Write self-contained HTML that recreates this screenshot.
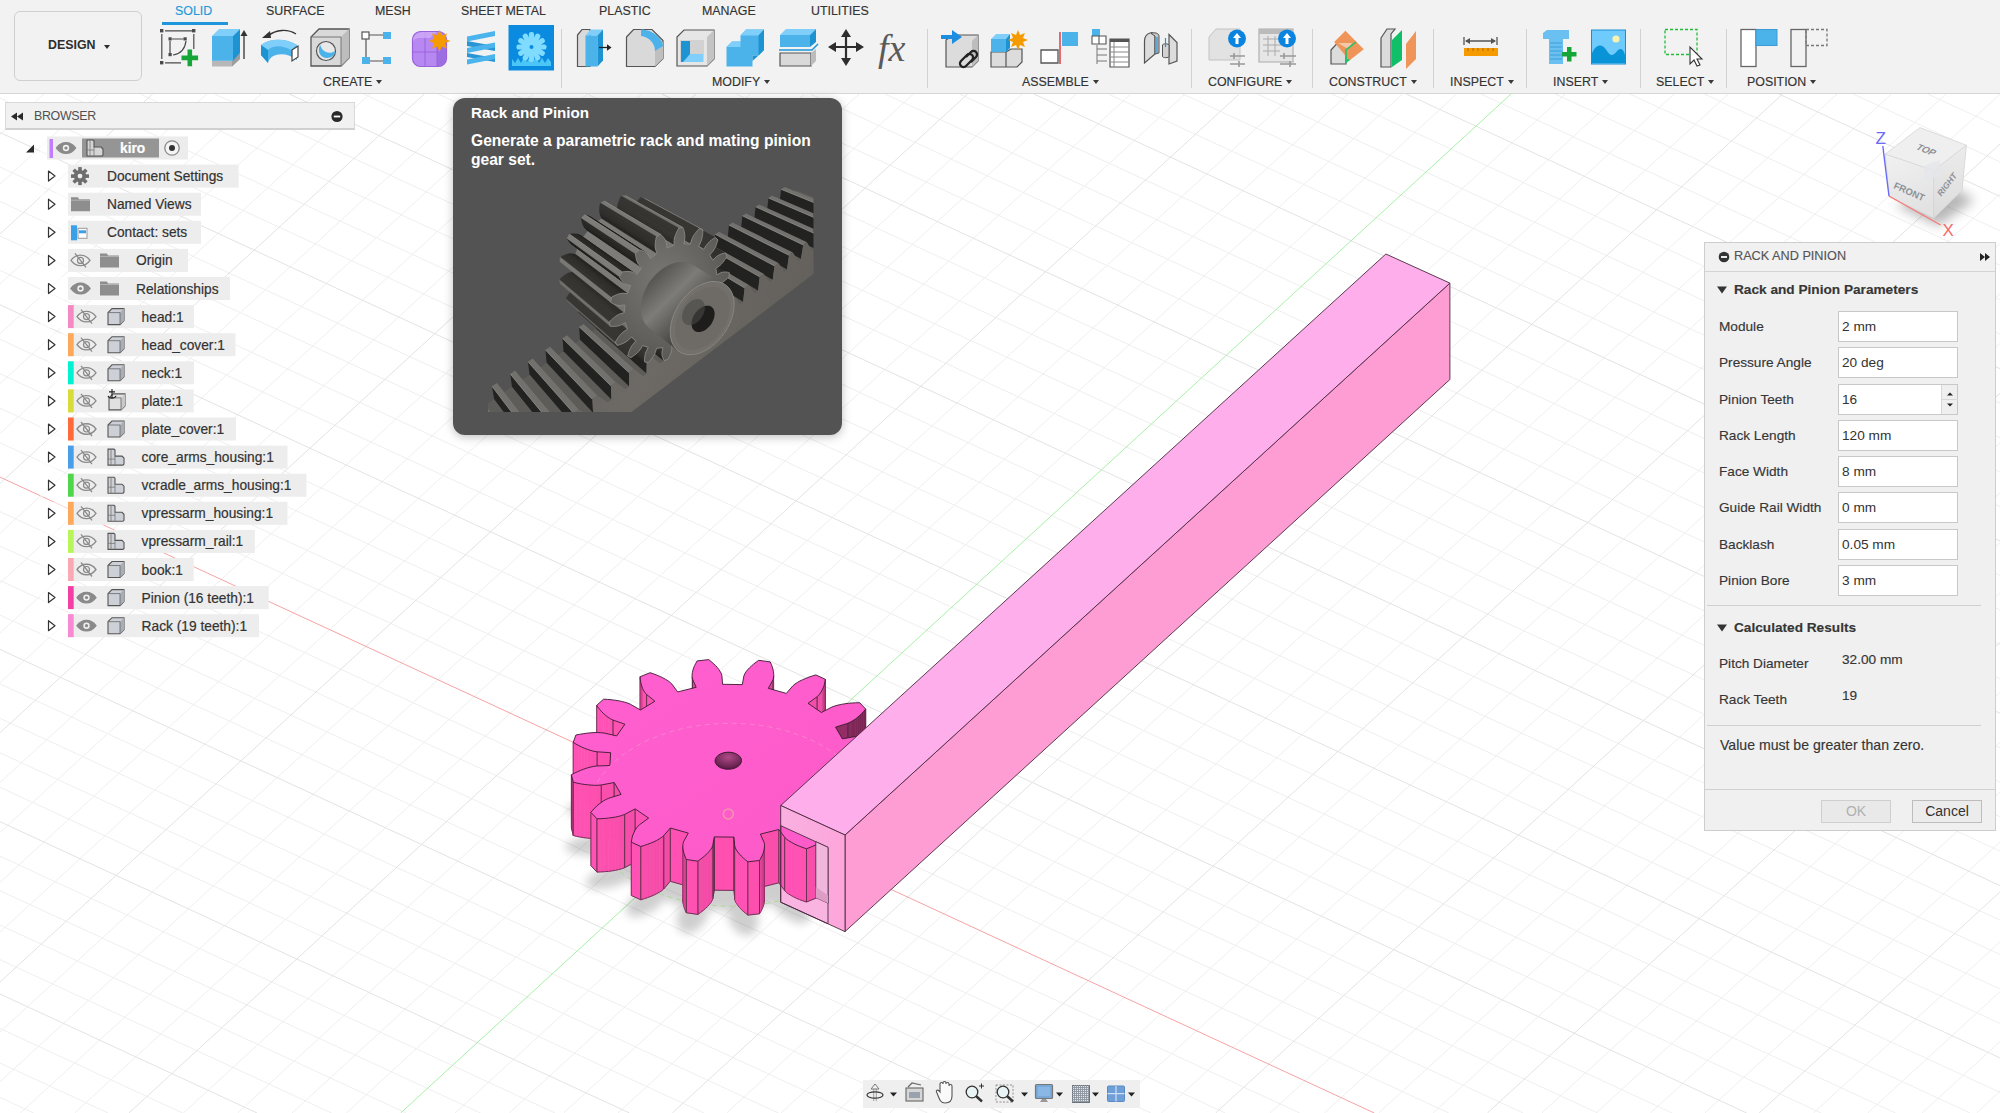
<!DOCTYPE html>
<html><head><meta charset="utf-8">
<style>
*{box-sizing:border-box}
html,body{margin:0;padding:0}
body{width:2000px;height:1113px;overflow:hidden;position:relative;background:#fff;font-family:"Liberation Sans",sans-serif;color:#3c3c3c}
.abs{position:absolute}
svg{position:absolute;left:0;top:0;overflow:visible}
#tb{position:absolute;left:0;top:0;width:2000px;height:94px;background:#f2f2f2;border-bottom:1px solid #d6d6d6}
.tab{position:absolute;top:4px;font-size:12.4px;color:#333;white-space:nowrap;letter-spacing:0;-webkit-text-stroke:0.15px currentColor}
.grp{position:absolute;top:75px;font-size:12.4px;color:#333;white-space:nowrap;-webkit-text-stroke:0.15px #333}
.grp i{display:inline-block;width:0;height:0;border-left:3.5px solid transparent;border-right:3.5px solid transparent;border-top:4.5px solid #3a3a3a;margin-left:4px;vertical-align:2px}
.sep{position:absolute;top:29px;width:1px;height:59px;background:#d2d2d2}
#design{position:absolute;left:14px;top:11px;width:128px;height:70px;border:1px solid #cfcfcf;border-radius:6px;background:#f2f2f2;font-weight:bold;font-size:12.4px;color:#2e2e2e}
#design span{position:absolute;left:33px;top:26px}
#design i{position:absolute;left:89px;top:33px;width:0;height:0;border-left:3.5px solid transparent;border-right:3.5px solid transparent;border-top:4.5px solid #2e2e2e}
/* browser */
#bh{position:absolute;left:5px;top:102px;width:350px;height:28px;background:#f1f1f1;border:1px solid #d9d9d9;border-bottom:2px solid #d0d0d0}
#bh span{position:absolute;left:28px;top:6px;font-size:12.4px;color:#505050;letter-spacing:-0.3px}
.row{position:absolute;height:23px}
.rbg{position:absolute;height:23px;background:#efefef}
.rt{position:absolute;font-size:13.75px;color:#333;white-space:nowrap;-webkit-text-stroke:0.2px #333}
/* tooltip */
#tt{position:absolute;left:453px;top:98px;width:389px;height:337px;background:#535353;border-radius:12px;box-shadow:0 2px 10px rgba(0,0,0,0.25)}
#tt .t1{position:absolute;left:18px;top:6px;font-size:15.2px;font-weight:bold;color:#fff;white-space:nowrap}
#tt .t2{position:absolute;left:18px;top:33px;font-size:15.6px;font-weight:bold;color:#fff;line-height:19px;width:370px}
/* dialog */
#dlg{position:absolute;left:1704px;top:242px;width:292px;height:589px;background:#f0f0f0;border:1px solid #cdcdcd}
#dlgh{position:absolute;left:0;top:0;width:290px;height:29px;background:#f1f1f1;border-bottom:1px solid #d4d4d4}
.lbl{position:absolute;font-size:13.65px;color:#363636;white-space:nowrap;-webkit-text-stroke:0.15px currentColor}
.inp{position:absolute;left:133px;width:120px;height:31px;background:#fff;border:1px solid #c8c8c8}
.inp span{position:absolute;left:3px;top:7px;font-size:13.65px;color:#333;white-space:nowrap}
.hsep{position:absolute;left:2px;width:274px;height:1px;background:#cfcfcf}
.btn{position:absolute;height:23px;border:1px solid #bdbdbd;background:#ececec;font-size:14px;text-align:center;line-height:21px}
/* nav */
#nav{position:absolute;left:863px;top:1080px;width:277px;height:28px;background:#efefef}
</style></head><body>
<svg width="2000" height="1113" viewBox="0 0 2000 1113">
<path d="M0.0 134.3L43.9 94.0M0.0 184.1L98.2 94.0M0.0 283.9L206.9 94.0M0.0 333.7L261.2 94.0M0.0 383.6L315.6 94.0M0.0 433.5L369.9 94.0M0.0 533.2L478.6 94.0M0.0 583.1L532.9 94.0M0.0 1097.4L33.7 1113.0M0.0 632.9L587.3 94.0M0.0 1063.0L108.1 1113.0M0.0 682.8L641.6 94.0M0.0 1028.5L182.6 1113.0M0.0 782.5L750.3 94.0M0.0 959.6L331.6 1113.0M0.0 832.4L804.6 94.0M0.0 925.1L406.1 1113.0M0.0 882.3L859.0 94.0M0.0 890.7L480.5 1113.0M0.0 932.1L913.3 94.0M0.0 856.2L555.0 1113.0M0.0 1031.9L1022.0 94.0M0.0 787.3L704.0 1113.0M0.0 1081.7L1076.3 94.0M0.0 752.8L778.5 1113.0M20.3 1113.0L1130.7 94.0M0.0 718.3L852.9 1113.0M74.6 1113.0L1185.0 94.0M0.0 683.9L927.4 1113.0M183.3 1113.0L1293.7 94.0M0.0 615.0L1076.4 1113.0M237.6 1113.0L1348.0 94.0M0.0 580.5L1150.9 1113.0M292.0 1113.0L1402.4 94.0M0.0 546.0L1225.3 1113.0M346.3 1113.0L1456.7 94.0M0.0 511.6L1299.8 1113.0M455.0 1113.0L1565.4 94.0M0.0 442.7L1448.8 1113.0M509.3 1113.0L1619.7 94.0M0.0 408.2L1523.2 1113.0M563.7 1113.0L1674.1 94.0M0.0 373.7L1597.7 1113.0M618.0 1113.0L1728.4 94.0M0.0 339.3L1672.2 1113.0M726.7 1113.0L1837.1 94.0M0.0 270.4L1821.2 1113.0M781.0 1113.0L1891.4 94.0M0.0 235.9L1895.6 1113.0M835.3 1113.0L1945.8 94.0M0.0 201.4L1970.1 1113.0M889.7 1113.0L2000.0 94.1M0.0 167.0L2000.0 1092.4M998.4 1113.0L2000.0 193.8M0.0 98.0L2000.0 1023.4M1052.7 1113.0L2000.0 243.7M65.7 94.0L2000.0 989.0M1107.0 1113.0L2000.0 293.6M140.2 94.0L2000.0 954.5M1161.4 1113.0L2000.0 343.4M214.7 94.0L2000.0 920.1M1270.1 1113.0L2000.0 443.1M363.7 94.0L2000.0 851.1M1324.4 1113.0L2000.0 493.0M438.1 94.0L2000.0 816.7M1378.7 1113.0L2000.0 542.9M512.6 94.0L2000.0 782.2M1433.1 1113.0L2000.0 592.7M587.1 94.0L2000.0 747.8M1541.8 1113.0L2000.0 692.5M736.0 94.0L2000.0 678.8M1596.1 1113.0L2000.0 742.3M810.5 94.0L2000.0 644.4M1650.4 1113.0L2000.0 792.2M885.0 94.0L2000.0 609.9M1704.8 1113.0L2000.0 842.1M959.5 94.0L2000.0 575.4M1813.5 1113.0L2000.0 941.8M1108.4 94.0L2000.0 506.5M1867.8 1113.0L2000.0 991.7M1182.9 94.0L2000.0 472.1M1922.1 1113.0L2000.0 1041.5M1257.4 94.0L2000.0 437.6M1976.5 1113.0L2000.0 1091.4M1331.9 94.0L2000.0 403.1M1480.8 94.0L2000.0 334.2M1555.3 94.0L2000.0 299.8M1629.8 94.0L2000.0 265.3M1704.3 94.0L2000.0 230.8M1853.2 94.0L2000.0 161.9M1927.7 94.0L2000.0 127.4" stroke="#efefef" stroke-width="1" fill="none"/>
<path d="M0.0 234.0L152.6 94.0M0.0 483.3L424.3 94.0M0.0 732.7L695.9 94.0M0.0 994.0L257.1 1113.0M0.0 982.0L967.6 94.0M0.0 821.7L629.5 1113.0M128.9 1113.0L1239.3 94.0M0.0 649.4L1001.9 1113.0M672.3 1113.0L1782.7 94.0M0.0 304.8L1746.7 1113.0M944.0 1113.0L2000.0 144.0M0.0 132.5L2000.0 1057.9M1215.7 1113.0L2000.0 393.3M289.2 94.0L2000.0 885.6M1487.4 1113.0L2000.0 642.6M661.6 94.0L2000.0 713.3M1759.1 1113.0L2000.0 891.9M1034.0 94.0L2000.0 541.0M1406.4 94.0L2000.0 368.7M1778.8 94.0L2000.0 196.4" stroke="#e3e3e3" stroke-width="1" fill="none"/>
<path d="M0.0 477.1L1374.3 1113.0" stroke="#f7a3a3" stroke-width="1" fill="none"/>
<path d="M400.6 1113.0L1511.0 94.0" stroke="#a6f0a6" stroke-width="1" fill="none"/>
<defs><filter id="gsh" x="-30%" y="-30%" width="160%" height="160%"><feGaussianBlur stdDeviation="5"/></filter></defs><polygon points="810.1,886.9 820.1,892.9 822.8,894.1 825.8,895.2 829.0,896.0 832.4,896.8 835.9,897.4 839.5,898.0 843.3,898.4 847.1,898.7 853.9,892.7 852.3,890.4 850.6,888.2 848.8,886.1 846.8,884.1 844.7,882.2 842.5,880.5 840.1,878.9 837.5,877.6 825.7,873.1 833.9,861.7 846.6,864.8 849.8,865.3 853.2,865.5 856.6,865.5 860.2,865.4 863.7,865.1 867.4,864.7 871.0,864.2 874.7,863.6 877.4,856.3 874.6,854.5 871.7,852.9 868.8,851.4 865.8,850.0 862.8,848.8 859.7,847.7 856.6,846.8 853.4,846.2 840.0,845.0 840.7,832.3 854.2,832.1 857.4,831.7 860.6,831.1 863.8,830.2 866.9,829.2 870.1,828.1 873.1,826.8 876.2,825.4 879.2,823.9 877.3,816.4 873.7,815.5 870.1,814.7 866.5,814.0 863.0,813.5 859.5,813.1 856.0,812.8 852.7,812.8 849.4,813.0 836.4,815.1 829.5,803.1 841.7,799.6 844.4,798.4 847.0,797.1 849.4,795.5 851.7,793.8 853.9,792.0 855.9,790.0 857.9,788.0 859.7,785.8 853.6,779.3 849.7,779.3 845.9,779.4 842.3,779.7 838.7,780.0 835.3,780.5 832.0,781.2 828.9,782.0 826.0,783.0 815.4,788.2 802.0,778.6 811.0,772.3 812.9,770.6 814.4,768.7 815.7,766.6 816.7,764.5 817.7,762.2 818.4,759.9 818.9,757.5 819.3,755.0 809.8,750.5 806.3,751.4 803.0,752.5 799.8,753.6 796.7,754.8 793.9,756.2 791.3,757.6 788.9,759.1 786.9,760.7 780.3,768.2 762.3,762.6 766.9,754.5 767.5,752.4 767.7,750.2 767.7,748.0 767.4,745.7 766.9,743.4 766.2,741.1 765.3,738.7 764.2,736.3 752.8,734.4 750.2,736.1 747.7,737.9 745.5,739.8 743.4,741.7 741.6,743.6 740.0,745.6 738.7,747.6 737.9,749.6 736.3,758.2 716.6,757.4 715.9,748.7 715.3,746.7 714.2,744.6 712.8,742.5 711.2,740.4 709.4,738.4 707.3,736.4 705.1,734.4 702.7,732.4 691.1,733.4 689.8,735.7 688.6,738.0 687.6,740.3 686.9,742.6 686.4,744.8 686.1,747.1 686.1,749.2 686.5,751.4 690.2,759.8 671.7,763.9 665.9,756.0 664.1,754.2 661.9,752.5 659.4,750.9 656.7,749.4 653.8,747.9 650.8,746.5 647.5,745.2 644.1,744.0 634.2,747.8 634.3,750.3 634.6,752.7 635.1,755.1 635.8,757.4 636.6,759.6 637.7,761.8 639.0,763.8 640.6,765.7 648.9,772.7 634.5,781.1 624.5,775.1 621.8,773.9 618.8,772.8 615.6,772.0 612.2,771.2 608.7,770.6 605.1,770.0 601.3,769.6 597.5,769.3 590.7,775.3 592.3,777.6 594.0,779.8 595.8,781.9 597.8,783.9 599.9,785.8 602.1,787.5 604.5,789.1 607.1,790.4 618.9,794.9 610.7,806.3 598.0,803.2 594.8,802.7 591.4,802.5 588.0,802.5 584.4,802.6 580.9,802.9 577.2,803.3 573.6,803.8 569.9,804.4 567.2,811.7 570.0,813.5 572.9,815.1 575.8,816.6 578.8,818.0 581.8,819.2 584.9,820.3 588.0,821.2 591.2,821.8 604.6,823.0 603.9,835.7 590.4,835.9 587.2,836.3 584.0,836.9 580.8,837.8 577.7,838.8 574.5,839.9 571.5,841.2 568.4,842.6 565.4,844.1 567.3,851.6 570.9,852.5 574.5,853.3 578.1,854.0 581.6,854.5 585.1,854.9 588.6,855.2 591.9,855.2 595.2,855.0 608.2,852.9 615.1,864.9 602.9,868.4 600.2,869.6 597.6,870.9 595.2,872.5 592.9,874.2 590.7,876.0 588.7,878.0 586.7,880.0 584.9,882.2 591.0,888.7 594.9,888.7 598.7,888.6 602.3,888.3 605.9,888.0 609.3,887.5 612.6,886.8 615.7,886.0 618.6,885.0 629.2,879.8 642.6,889.4 633.6,895.7 631.7,897.4 630.2,899.3 628.9,901.4 627.9,903.5 626.9,905.8 626.2,908.1 625.7,910.5 625.3,913.0 634.8,917.5 638.3,916.6 641.6,915.5 644.8,914.4 647.9,913.2 650.7,911.8 653.3,910.4 655.7,908.9 657.7,907.3 664.3,899.8 682.3,905.4 677.7,913.5 677.1,915.6 676.9,917.8 676.9,920.0 677.2,922.3 677.7,924.6 678.4,926.9 679.3,929.3 680.4,931.7 691.8,933.6 694.4,931.9 696.9,930.1 699.1,928.2 701.2,926.3 703.0,924.4 704.6,922.4 705.9,920.4 706.7,918.4 708.3,909.8 728.0,910.6 728.7,919.3 729.3,921.3 730.4,923.4 731.8,925.5 733.4,927.6 735.2,929.6 737.3,931.6 739.5,933.6 741.9,935.6 753.5,934.6 754.8,932.3 756.0,930.0 757.0,927.7 757.7,925.4 758.2,923.2 758.5,920.9 758.5,918.8 758.1,916.6 754.4,908.2 772.9,904.1 778.7,912.0 780.5,913.8 782.7,915.5 785.2,917.1 787.9,918.6 790.8,920.1 793.8,921.5 797.1,922.8 800.5,924.0 810.4,920.2 810.3,917.7 810.0,915.3 809.5,912.9 808.8,910.6 808.0,908.4 806.9,906.2 805.6,904.2 804.0,902.3 795.7,895.3" fill="#000" opacity="0.19" filter="url(#gsh)"/>
<polygon points="843.9,869.0 847.9,865.1 851.6,861.0 855.0,856.9 858.0,852.6 860.6,848.2 862.9,843.7 864.9,839.2 866.4,834.5 867.6,829.9 868.4,825.2 868.8,820.4 868.8,815.7 868.4,810.9 867.7,806.2 866.5,801.5 865.0,796.8 863.1,792.2 860.9,787.6 858.3,783.1 855.3,778.8 852.0,774.5 848.3,770.3 844.3,766.2 840.0,762.3 835.4,758.5 830.5,754.9 825.3,751.5 819.8,748.2 814.1,745.1 808.2,742.2 802.0,739.5 795.7,737.0 789.1,734.7 782.4,732.7 775.5,730.8 768.6,729.2 761.5,727.9 754.3,726.8 747.0,725.9 739.7,725.3 732.3,724.9 725.0,724.7 717.6,724.9 710.3,725.2 703.0,725.8 695.8,726.7 688.7,727.8 681.7,729.1 674.9,730.7 668.1,732.5 661.6,734.6 655.2,736.8 649.0,739.3 643.0,742.0 637.3,744.9 631.8,747.9 626.6,751.2 621.7,754.6 617.0,758.2 612.7,762.0 608.7,765.9 605.0,770.0 601.6,774.1 598.6,778.4 596.0,782.8 593.7,787.3 591.7,791.8 590.2,796.5 589.0,801.1 588.2,805.8 587.8,810.6 587.8,815.3 588.2,820.1 588.9,824.8 590.1,829.5 591.6,834.2 593.5,838.8 595.7,843.4 598.3,847.9 601.3,852.2 604.6,856.5 608.3,860.7 612.3,864.8 616.6,868.7 621.2,872.5 626.1,876.1 631.3,879.5 636.8,882.8 642.5,885.9 648.4,888.8 654.6,891.5 660.9,894.0 667.5,896.3 674.2,898.3 681.1,900.2 688.0,901.8 695.1,903.1 702.3,904.2 709.6,905.1 716.9,905.7 724.3,906.1 731.6,906.3 739.0,906.1 746.3,905.8 753.6,905.2 760.8,904.3 767.9,903.2 774.9,901.9 781.7,900.3 788.5,898.5 795.0,896.4 801.4,894.2 807.6,891.7 813.6,889.0 819.3,886.1 824.8,883.1 830.0,879.8 834.9,876.4 839.6,872.8" fill="none" stroke="#a8dc90" stroke-width="1" stroke-dasharray="5 4"/>
<polygon points="780.8,825.7 828.0,847.3 828.0,923.8 780.7,902.2" fill="#f9b4e2"/>
<polygon points="640.2,730.0 640.3,732.5 640.3,679.2 640.2,676.7" fill="#932e66" stroke="#932e66" stroke-width="0.7"/><path d="M640.2 730.0L640.3 732.5M640.2 730.0L640.2 676.7" stroke="#4a2a3c" stroke-width="0.8" fill="none"/>
<polygon points="692.1,730.1 692.5,732.2 692.5,679.0 692.1,676.9" fill="#b1377a" stroke="#b1377a" stroke-width="0.7"/><path d="M692.1 730.1L692.5 732.2M692.5 732.2L692.5 679.0" stroke="#4a2a3c" stroke-width="0.8" fill="none"/>
<polygon points="773.5,731.2 773.7,729.1 773.7,675.8 773.5,678.0" fill="#8c2c60" stroke="#8c2c60" stroke-width="0.7"/><path d="M773.5 731.2L773.7 729.1" stroke="#4a2a3c" stroke-width="0.8" fill="none"/>
<polygon points="640.3,732.5 640.6,734.9 640.6,681.7 640.3,679.2" fill="#a23370" stroke="#a23370" stroke-width="0.7"/><path d="M640.3 732.5L640.6 734.9" stroke="#4a2a3c" stroke-width="0.8" fill="none"/>
<polygon points="772.9,733.3 773.5,731.2 773.5,678.0 772.9,680.1" fill="#b3387b" stroke="#b3387b" stroke-width="0.7"/><path d="M772.9 733.3L773.5 731.2M772.9 733.3L772.9 680.1" stroke="#4a2a3c" stroke-width="0.8" fill="none"/>
<polygon points="640.6,734.9 641.1,737.3 641.1,684.0 640.6,681.7" fill="#b2387b" stroke="#b2387b" stroke-width="0.7"/><path d="M640.6 734.9L641.1 737.3" stroke="#4a2a3c" stroke-width="0.8" fill="none"/>
<polygon points="824.9,735.0 825.3,732.5 825.3,679.3 824.9,681.7" fill="#952f67" stroke="#952f67" stroke-width="0.7"/><path d="M824.9 735.0L825.3 732.5M825.3 732.5L825.3 679.3" stroke="#4a2a3c" stroke-width="0.8" fill="none"/>
<polygon points="692.5,732.2 696.2,740.6 696.2,687.3 692.5,679.0" fill="#de4699" stroke="#de4699" stroke-width="0.7"/><path d="M692.5 732.2L696.2 740.6M692.5 732.2L692.5 679.0M696.2 740.6L696.2 687.3" stroke="#4a2a3c" stroke-width="0.8" fill="none"/>
<polygon points="641.1,737.3 641.8,739.6 641.8,686.3 641.1,684.0" fill="#c33d86" stroke="#c33d86" stroke-width="0.7"/><path d="M641.1 737.3L641.8 739.6" stroke="#4a2a3c" stroke-width="0.8" fill="none"/>
<polygon points="824.4,737.4 824.9,735.0 824.9,681.7 824.4,684.2" fill="#a43371" stroke="#a43371" stroke-width="0.7"/><path d="M824.4 737.4L824.9 735.0" stroke="#4a2a3c" stroke-width="0.8" fill="none"/>
<polygon points="768.3,741.6 772.9,733.3 772.9,680.1 768.3,688.3" fill="#e0469b" stroke="#e0469b" stroke-width="0.7"/><path d="M768.3 741.6L772.9 733.3M768.3 741.6L768.3 688.3M772.9 733.3L772.9 680.1" stroke="#4a2a3c" stroke-width="0.8" fill="none"/>
<polygon points="641.8,739.6 642.6,741.8 642.6,688.5 641.8,686.3" fill="#d54393" stroke="#d54393" stroke-width="0.7"/><path d="M641.8 739.6L642.6 741.8" stroke="#4a2a3c" stroke-width="0.8" fill="none"/>
<polygon points="823.7,739.8 824.4,737.4 824.4,684.2 823.7,686.5" fill="#b4387c" stroke="#b4387c" stroke-width="0.7"/><path d="M823.7 739.8L824.4 737.4" stroke="#4a2a3c" stroke-width="0.8" fill="none"/>
<polygon points="642.6,741.8 643.7,743.9 643.7,690.6 642.6,688.5" fill="#e949a1" stroke="#e949a1" stroke-width="0.7"/><path d="M642.6 741.8L643.7 743.9" stroke="#4a2a3c" stroke-width="0.8" fill="none"/>
<polygon points="822.7,742.1 823.7,739.8 823.7,686.5 822.7,688.8" fill="#c43e88" stroke="#c43e88" stroke-width="0.7"/><path d="M822.7 742.1L823.7 739.8" stroke="#4a2a3c" stroke-width="0.8" fill="none"/>
<polygon points="643.7,743.9 645.0,745.9 645.0,692.6 643.7,690.6" fill="#ff51b1" stroke="#ff51b1" stroke-width="0.7"/><path d="M643.7 743.9L645.0 745.9" stroke="#4a2a3c" stroke-width="0.8" fill="none"/>
<polygon points="821.7,744.2 822.7,742.1 822.7,688.8 821.7,691.0" fill="#d74394" stroke="#d74394" stroke-width="0.7"/><path d="M821.7 744.2L822.7 742.1" stroke="#4a2a3c" stroke-width="0.8" fill="none"/>
<polygon points="645.0,745.9 646.6,747.7 646.6,694.5 645.0,692.6" fill="#ff52b5" stroke="#ff52b5" stroke-width="0.7"/><path d="M645.0 745.9L646.6 747.7M646.6 747.7L646.6 694.5" stroke="#4a2a3c" stroke-width="0.8" fill="none"/>
<polygon points="820.4,746.3 821.7,744.2 821.7,691.0 820.4,693.0" fill="#eb4aa2" stroke="#eb4aa2" stroke-width="0.7"/><path d="M820.4 746.3L821.7 744.2" stroke="#4a2a3c" stroke-width="0.8" fill="none"/>
<polygon points="818.9,748.3 820.4,746.3 820.4,693.0 818.9,695.0" fill="#f14ca7" stroke="#f14ca7" stroke-width="0.7"/><path d="M818.9 748.3L820.4 746.3" stroke="#4a2a3c" stroke-width="0.8" fill="none"/>
<polygon points="646.6,747.7 654.9,754.5 654.9,701.2 646.6,694.5" fill="#ff52b5" stroke="#ff52b5" stroke-width="0.7"/><path d="M646.6 747.7L654.9 754.5M646.6 747.7L646.6 694.5M654.9 754.5L654.9 701.2" stroke="#4a2a3c" stroke-width="0.8" fill="none"/>
<polygon points="817.0,750.1 818.9,748.3 818.9,695.0 817.0,696.8" fill="#f34ca7" stroke="#f34ca7" stroke-width="0.7"/><path d="M817.0 750.1L818.9 748.3M817.0 750.1L817.0 696.8" stroke="#4a2a3c" stroke-width="0.8" fill="none"/>
<polygon points="808.0,756.6 817.0,750.1 817.0,696.8 808.0,703.3" fill="#f44da9" stroke="#f44da9" stroke-width="0.7"/><path d="M808.0 756.6L817.0 750.1M808.0 756.6L808.0 703.3M817.0 750.1L817.0 696.8" stroke="#4a2a3c" stroke-width="0.8" fill="none"/>
<polygon points="596.7,758.6 598.3,760.9 598.3,707.6 596.7,705.4" fill="#ff52b5" stroke="#ff52b5" stroke-width="0.7"/><path d="M596.7 758.6L598.3 760.9M596.7 758.6L596.7 705.4" stroke="#4a2a3c" stroke-width="0.8" fill="none"/>
<polygon points="598.3,760.9 600.0,763.0 600.0,709.8 598.3,707.6" fill="#ff52b5" stroke="#ff52b5" stroke-width="0.7"/><path d="M598.3 760.9L600.0 763.0" stroke="#4a2a3c" stroke-width="0.8" fill="none"/>
<polygon points="600.0,763.0 601.8,765.1 601.8,711.8 600.0,709.8" fill="#ff52b5" stroke="#ff52b5" stroke-width="0.7"/><path d="M600.0 763.0L601.8 765.1" stroke="#4a2a3c" stroke-width="0.8" fill="none"/>
<polygon points="601.8,765.1 603.8,767.0 603.8,713.8 601.8,711.8" fill="#ff52b5" stroke="#ff52b5" stroke-width="0.7"/><path d="M601.8 765.1L603.8 767.0" stroke="#4a2a3c" stroke-width="0.8" fill="none"/>
<polygon points="863.9,764.5 865.7,762.3 865.7,709.0 863.9,711.2" fill="#7d2756" stroke="#7d2756" stroke-width="0.7"/><path d="M863.9 764.5L865.7 762.3M865.7 762.3L865.7 709.0" stroke="#4a2a3c" stroke-width="0.8" fill="none"/>
<polygon points="603.8,767.0 605.9,768.9 605.9,715.6 603.8,713.8" fill="#ff52b5" stroke="#ff52b5" stroke-width="0.7"/><path d="M603.8 767.0L605.9 768.9" stroke="#4a2a3c" stroke-width="0.8" fill="none"/>
<polygon points="861.9,766.6 863.9,764.5 863.9,711.2 861.9,713.3" fill="#7c2756" stroke="#7c2756" stroke-width="0.7"/><path d="M861.9 766.6L863.9 764.5" stroke="#4a2a3c" stroke-width="0.8" fill="none"/>
<polygon points="605.9,768.9 608.1,770.5 608.1,717.3 605.9,715.6" fill="#ff52b5" stroke="#ff52b5" stroke-width="0.7"/><path d="M605.9 768.9L608.1 770.5" stroke="#4a2a3c" stroke-width="0.8" fill="none"/>
<polygon points="859.9,768.6 861.9,766.6 861.9,713.3 859.9,715.3" fill="#7c2756" stroke="#7c2756" stroke-width="0.7"/><path d="M859.9 768.6L861.9 766.6" stroke="#4a2a3c" stroke-width="0.8" fill="none"/>
<polygon points="608.1,770.5 610.5,772.1 610.5,718.8 608.1,717.3" fill="#ff52b5" stroke="#ff52b5" stroke-width="0.7"/><path d="M608.1 770.5L610.5 772.1" stroke="#4a2a3c" stroke-width="0.8" fill="none"/>
<polygon points="610.5,772.1 613.1,773.3 613.1,720.1 610.5,718.8" fill="#ff52b4" stroke="#ff52b4" stroke-width="0.7"/><path d="M610.5 772.1L613.1 773.3M613.1 773.3L613.1 720.1" stroke="#4a2a3c" stroke-width="0.8" fill="none"/>
<polygon points="857.7,770.5 859.9,768.6 859.9,715.3 857.7,717.2" fill="#7c2756" stroke="#7c2756" stroke-width="0.7"/><path d="M857.7 770.5L859.9 768.6" stroke="#4a2a3c" stroke-width="0.8" fill="none"/>
<polygon points="855.4,772.3 857.7,770.5 857.7,717.2 855.4,719.0" fill="#7e2757" stroke="#7e2757" stroke-width="0.7"/><path d="M855.4 772.3L857.7 770.5" stroke="#4a2a3c" stroke-width="0.8" fill="none"/>
<polygon points="613.1,773.3 624.9,777.5 624.9,724.2 613.1,720.1" fill="#ff52b3" stroke="#ff52b3" stroke-width="0.7"/><path d="M613.1 773.3L624.9 777.5M613.1 773.3L613.1 720.1M624.9 777.5L624.9 724.2" stroke="#4a2a3c" stroke-width="0.8" fill="none"/>
<polygon points="853.0,773.9 855.4,772.3 855.4,719.0 853.0,720.6" fill="#7f2858" stroke="#7f2858" stroke-width="0.7"/><path d="M853.0 773.9L855.4 772.3" stroke="#4a2a3c" stroke-width="0.8" fill="none"/>
<polygon points="850.4,775.3 853.0,773.9 853.0,720.6 850.4,722.0" fill="#82295a" stroke="#82295a" stroke-width="0.7"/><path d="M850.4 775.3L853.0 773.9" stroke="#4a2a3c" stroke-width="0.8" fill="none"/>
<polygon points="847.7,776.5 850.4,775.3 850.4,722.0 847.7,723.3" fill="#852a5c" stroke="#852a5c" stroke-width="0.7"/><path d="M847.7 776.5L850.4 775.3M847.7 776.5L847.7 723.3" stroke="#4a2a3c" stroke-width="0.8" fill="none"/>
<polygon points="835.5,780.4 847.7,776.5 847.7,723.3 835.5,727.1" fill="#922e65" stroke="#922e65" stroke-width="0.7"/><path d="M835.5 780.4L847.7 776.5M835.5 780.4L835.5 727.1M847.7 776.5L847.7 723.3" stroke="#4a2a3c" stroke-width="0.8" fill="none"/>
<polygon points="573.2,795.7 576.0,797.4 576.0,744.1 573.2,742.4" fill="#ff52b4" stroke="#ff52b4" stroke-width="0.7"/><path d="M573.2 795.7L576.0 797.4M573.2 795.7L573.2 742.4" stroke="#4a2a3c" stroke-width="0.8" fill="none"/>
<polygon points="576.0,797.4 578.9,798.9 578.9,745.6 576.0,744.1" fill="#ff52b4" stroke="#ff52b4" stroke-width="0.7"/><path d="M576.0 797.4L578.9 798.9" stroke="#4a2a3c" stroke-width="0.8" fill="none"/>
<polygon points="578.9,798.9 581.8,800.3 581.8,747.1 578.9,745.6" fill="#ff52b4" stroke="#ff52b4" stroke-width="0.7"/><path d="M578.9 798.9L581.8 800.3" stroke="#4a2a3c" stroke-width="0.8" fill="none"/>
<polygon points="581.8,800.3 584.8,801.6 584.8,748.4 581.8,747.1" fill="#ff52b4" stroke="#ff52b4" stroke-width="0.7"/><path d="M581.8 800.3L584.8 801.6" stroke="#4a2a3c" stroke-width="0.8" fill="none"/>
<polygon points="584.8,801.6 587.8,802.8 587.8,749.5 584.8,748.4" fill="#ff52b3" stroke="#ff52b3" stroke-width="0.7"/><path d="M584.8 801.6L587.8 802.8" stroke="#4a2a3c" stroke-width="0.8" fill="none"/>
<polygon points="587.8,802.8 590.9,803.8 590.9,750.5 587.8,749.5" fill="#ff51b3" stroke="#ff51b3" stroke-width="0.7"/><path d="M587.8 802.8L590.9 803.8" stroke="#4a2a3c" stroke-width="0.8" fill="none"/>
<polygon points="590.9,803.8 594.0,804.6 594.0,751.3 590.9,750.5" fill="#ff51b3" stroke="#ff51b3" stroke-width="0.7"/><path d="M590.9 803.8L594.0 804.6" stroke="#4a2a3c" stroke-width="0.8" fill="none"/>
<polygon points="882.2,801.5 885.2,799.9 885.2,746.6 882.2,748.2" fill="#672047" stroke="#672047" stroke-width="0.7"/><path d="M882.2 801.5L885.2 799.9M885.2 799.9L885.2 746.6" stroke="#4a2a3c" stroke-width="0.8" fill="none"/>
<polygon points="594.0,804.6 597.2,805.1 597.2,751.8 594.0,751.3" fill="#ff51b2" stroke="#ff51b2" stroke-width="0.7"/><path d="M594.0 804.6L597.2 805.1M597.2 805.1L597.2 751.8" stroke="#4a2a3c" stroke-width="0.8" fill="none"/>
<polygon points="597.2,805.1 610.6,806.0 610.6,752.7 597.2,751.8" fill="#ff50b1" stroke="#ff50b1" stroke-width="0.7"/><path d="M597.2 805.1L610.6 806.0M597.2 805.1L597.2 751.8M610.6 806.0L610.6 752.7" stroke="#4a2a3c" stroke-width="0.8" fill="none"/>
<polygon points="879.1,803.0 882.2,801.5 882.2,748.2 879.1,749.7" fill="#682148" stroke="#682148" stroke-width="0.7"/><path d="M879.1 803.0L882.2 801.5" stroke="#4a2a3c" stroke-width="0.8" fill="none"/>
<polygon points="876.1,804.4 879.1,803.0 879.1,749.7 876.1,751.1" fill="#682148" stroke="#682148" stroke-width="0.7"/><path d="M876.1 804.4L879.1 803.0" stroke="#4a2a3c" stroke-width="0.8" fill="none"/>
<polygon points="872.9,805.6 876.1,804.4 876.1,751.1 872.9,752.3" fill="#682148" stroke="#682148" stroke-width="0.7"/><path d="M872.9 805.6L876.1 804.4" stroke="#4a2a3c" stroke-width="0.8" fill="none"/>
<polygon points="869.8,806.6 872.9,805.6 872.9,752.3 869.8,753.4" fill="#682148" stroke="#682148" stroke-width="0.7"/><path d="M869.8 806.6L872.9 805.6" stroke="#4a2a3c" stroke-width="0.8" fill="none"/>
<polygon points="866.6,807.5 869.8,806.6 869.8,753.4 866.6,754.3" fill="#692148" stroke="#692148" stroke-width="0.7"/><path d="M866.6 807.5L869.8 806.6" stroke="#4a2a3c" stroke-width="0.8" fill="none"/>
<polygon points="863.4,808.3 866.6,807.5 866.6,754.3 863.4,755.0" fill="#692149" stroke="#692149" stroke-width="0.7"/><path d="M863.4 808.3L866.6 807.5" stroke="#4a2a3c" stroke-width="0.8" fill="none"/>
<polygon points="860.2,808.7 863.4,808.3 863.4,755.0 860.2,755.4" fill="#6a2149" stroke="#6a2149" stroke-width="0.7"/><path d="M860.2 808.7L863.4 808.3M860.2 808.7L860.2 755.4" stroke="#4a2a3c" stroke-width="0.8" fill="none"/>
<polygon points="846.7,809.2 860.2,808.7 860.2,755.4 846.7,756.0" fill="#6b214a" stroke="#6b214a" stroke-width="0.7"/><path d="M846.7 809.2L860.2 808.7M846.7 809.2L846.7 756.0M860.2 808.7L860.2 755.4" stroke="#4a2a3c" stroke-width="0.8" fill="none"/>
<polygon points="846.0,822.0 846.7,809.2 846.7,756.0 846.0,768.7" fill="#361125" stroke="#361125" stroke-width="0.7"/><path d="M846.0 822.0L846.7 809.2M846.0 822.0L846.0 768.7M846.7 809.2L846.7 756.0" stroke="#4a2a3c" stroke-width="0.8" fill="none"/>
<polygon points="571.4,828.1 573.3,835.5 573.3,782.2 571.4,774.8" fill="#bc3b82" stroke="#bc3b82" stroke-width="0.7"/><path d="M571.4 828.1L573.3 835.5M571.4 828.1L571.4 774.8M573.3 835.5L573.3 782.2" stroke="#4a2a3c" stroke-width="0.8" fill="none"/>
<polygon points="573.3,835.5 576.9,836.4 576.9,783.1 573.3,782.2" fill="#ff51b2" stroke="#ff51b2" stroke-width="0.7"/><path d="M573.3 835.5L576.9 836.4M573.3 835.5L573.3 782.2" stroke="#4a2a3c" stroke-width="0.8" fill="none"/>
<polygon points="576.9,836.4 580.5,837.1 580.5,783.8 576.9,783.1" fill="#ff51b2" stroke="#ff51b2" stroke-width="0.7"/><path d="M576.9 836.4L580.5 837.1" stroke="#4a2a3c" stroke-width="0.8" fill="none"/>
<polygon points="601.2,838.2 614.2,835.8 614.2,782.5 601.2,785.0" fill="#fb4fad" stroke="#fb4fad" stroke-width="0.7"/><path d="M601.2 838.2L614.2 835.8M601.2 838.2L601.2 785.0M614.2 835.8L614.2 782.5" stroke="#4a2a3c" stroke-width="0.8" fill="none"/>
<polygon points="580.5,837.1 584.1,837.7 584.1,784.4 580.5,783.8" fill="#ff51b2" stroke="#ff51b2" stroke-width="0.7"/><path d="M580.5 837.1L584.1 837.7" stroke="#4a2a3c" stroke-width="0.8" fill="none"/>
<polygon points="584.1,837.7 587.6,838.1 587.6,784.8 584.1,784.4" fill="#ff51b1" stroke="#ff51b1" stroke-width="0.7"/><path d="M584.1 837.7L587.6 838.1" stroke="#4a2a3c" stroke-width="0.8" fill="none"/>
<polygon points="587.6,838.1 591.1,838.4 591.1,785.1 587.6,784.8" fill="#ff50b1" stroke="#ff50b1" stroke-width="0.7"/><path d="M587.6 838.1L591.1 838.4" stroke="#4a2a3c" stroke-width="0.8" fill="none"/>
<polygon points="597.9,838.5 601.2,838.2 601.2,785.0 597.9,785.3" fill="#fd4faf" stroke="#fd4faf" stroke-width="0.7"/><path d="M597.9 838.5L601.2 838.2M601.2 838.2L601.2 785.0" stroke="#4a2a3c" stroke-width="0.8" fill="none"/>
<polygon points="591.1,838.4 594.6,838.6 594.6,785.3 591.1,785.1" fill="#ff50b0" stroke="#ff50b0" stroke-width="0.7"/><path d="M591.1 838.4L594.6 838.6" stroke="#4a2a3c" stroke-width="0.8" fill="none"/>
<polygon points="594.6,838.6 597.9,838.5 597.9,785.3 594.6,785.3" fill="#ff50b0" stroke="#ff50b0" stroke-width="0.7"/><path d="M594.6 838.6L597.9 838.5" stroke="#4a2a3c" stroke-width="0.8" fill="none"/>
<polygon points="880.7,839.7 883.4,832.3 883.4,779.0 880.7,786.4" fill="#501937" stroke="#501937" stroke-width="0.7"/><path d="M880.7 839.7L883.4 832.3M880.7 839.7L880.7 786.4M883.4 832.3L883.4 779.0" stroke="#4a2a3c" stroke-width="0.8" fill="none"/>
<polygon points="614.2,835.8 621.1,847.6 621.1,794.4 614.2,782.5" fill="#f74daa" stroke="#f74daa" stroke-width="0.7"/><path d="M614.2 835.8L621.1 847.6M614.2 835.8L614.2 782.5M621.1 847.6L621.1 794.4" stroke="#4a2a3c" stroke-width="0.8" fill="none"/>
<polygon points="839.9,838.8 852.6,841.7 852.6,788.4 839.9,785.6" fill="#ff51b2" stroke="#ff51b2" stroke-width="0.7"/><path d="M839.9 838.8L852.6 841.7M839.9 838.8L839.9 785.6M852.6 841.7L852.6 788.4" stroke="#4a2a3c" stroke-width="0.8" fill="none"/>
<polygon points="877.0,840.4 880.7,839.7 880.7,786.4 877.0,787.2" fill="#fb4fad" stroke="#fb4fad" stroke-width="0.7"/><path d="M877.0 840.4L880.7 839.7M880.7 839.7L880.7 786.4" stroke="#4a2a3c" stroke-width="0.8" fill="none"/>
<polygon points="873.4,841.1 877.0,840.4 877.0,787.2 873.4,787.8" fill="#fc4fae" stroke="#fc4fae" stroke-width="0.7"/><path d="M873.4 841.1L877.0 840.4" stroke="#4a2a3c" stroke-width="0.8" fill="none"/>
<polygon points="869.7,841.6 873.4,841.1 873.4,787.8 869.7,788.3" fill="#fc4fae" stroke="#fc4fae" stroke-width="0.7"/><path d="M869.7 841.6L873.4 841.1" stroke="#4a2a3c" stroke-width="0.8" fill="none"/>
<polygon points="852.6,841.7 855.8,842.1 855.8,788.8 852.6,788.4" fill="#ff51b1" stroke="#ff51b1" stroke-width="0.7"/><path d="M852.6 841.7L855.8 842.1M852.6 841.7L852.6 788.4" stroke="#4a2a3c" stroke-width="0.8" fill="none"/>
<polygon points="866.2,841.9 869.7,841.6 869.7,788.3 866.2,788.6" fill="#fd4faf" stroke="#fd4faf" stroke-width="0.7"/><path d="M866.2 841.9L869.7 841.6" stroke="#4a2a3c" stroke-width="0.8" fill="none"/>
<polygon points="862.6,842.1 866.2,841.9 866.2,788.6 862.6,788.8" fill="#fe50af" stroke="#fe50af" stroke-width="0.7"/><path d="M862.6 842.1L866.2 841.9" stroke="#4a2a3c" stroke-width="0.8" fill="none"/>
<polygon points="855.8,842.1 859.2,842.2 859.2,788.9 855.8,788.8" fill="#ff50b0" stroke="#ff50b0" stroke-width="0.7"/><path d="M855.8 842.1L859.2 842.2" stroke="#4a2a3c" stroke-width="0.8" fill="none"/>
<polygon points="859.2,842.2 862.6,842.1 862.6,788.8 859.2,788.9" fill="#ff50b0" stroke="#ff50b0" stroke-width="0.7"/><path d="M859.2 842.2L862.6 842.1" stroke="#4a2a3c" stroke-width="0.8" fill="none"/>
<polygon points="831.7,850.5 839.9,838.8 839.9,785.6 831.7,797.2" fill="#f14ca6" stroke="#f14ca6" stroke-width="0.7"/><path d="M831.7 850.5L839.9 838.8M831.7 850.5L831.7 797.2M839.9 838.8L839.9 785.6" stroke="#4a2a3c" stroke-width="0.8" fill="none"/>
<polygon points="624.6,867.7 635.2,862.2 635.2,808.9 624.6,814.4" fill="#f64daa" stroke="#f64daa" stroke-width="0.7"/><path d="M624.6 867.7L635.2 862.2M624.6 867.7L624.6 814.4M635.2 862.2L635.2 808.9" stroke="#4a2a3c" stroke-width="0.8" fill="none"/>
<polygon points="635.2,862.2 648.6,871.4 648.6,818.1 635.2,808.9" fill="#ff52b5" stroke="#ff52b5" stroke-width="0.7"/><path d="M635.2 862.2L648.6 871.4M635.2 862.2L635.2 808.9M648.6 871.4L648.6 818.1" stroke="#4a2a3c" stroke-width="0.8" fill="none"/>
<polygon points="621.7,868.8 624.6,867.7 624.6,814.4 621.7,815.5" fill="#f84eab" stroke="#f84eab" stroke-width="0.7"/><path d="M621.7 868.8L624.6 867.7M624.6 867.7L624.6 814.4" stroke="#4a2a3c" stroke-width="0.8" fill="none"/>
<polygon points="590.9,865.7 597.0,872.1 597.0,818.8 590.9,812.4" fill="#ff52b5" stroke="#ff52b5" stroke-width="0.7"/><path d="M590.9 865.7L597.0 872.1M590.9 865.7L590.9 812.4M597.0 872.1L597.0 818.8" stroke="#4a2a3c" stroke-width="0.8" fill="none"/>
<polygon points="618.6,869.6 621.7,868.8 621.7,815.5 618.6,816.4" fill="#fa4eac" stroke="#fa4eac" stroke-width="0.7"/><path d="M618.6 869.6L621.7 868.8" stroke="#4a2a3c" stroke-width="0.8" fill="none"/>
<polygon points="615.3,870.3 618.6,869.6 618.6,816.4 615.3,817.1" fill="#fb4fad" stroke="#fb4fad" stroke-width="0.7"/><path d="M615.3 870.3L618.6 869.6" stroke="#4a2a3c" stroke-width="0.8" fill="none"/>
<polygon points="816.1,864.7 826.1,870.4 826.1,817.2 816.1,811.4" fill="#ff52b4" stroke="#ff52b4" stroke-width="0.7"/><path d="M816.1 864.7L826.1 870.4M816.1 864.7L816.1 811.4M826.1 870.4L826.1 817.2" stroke="#4a2a3c" stroke-width="0.8" fill="none"/>
<polygon points="611.9,870.9 615.3,870.3 615.3,817.1 611.9,817.6" fill="#fc4fae" stroke="#fc4fae" stroke-width="0.7"/><path d="M611.9 870.9L615.3 870.3" stroke="#4a2a3c" stroke-width="0.8" fill="none"/>
<polygon points="608.3,871.4 611.9,870.9 611.9,817.6 608.3,818.1" fill="#fc4fae" stroke="#fc4fae" stroke-width="0.7"/><path d="M608.3 871.4L611.9 870.9" stroke="#4a2a3c" stroke-width="0.8" fill="none"/>
<polygon points="604.7,871.7 608.3,871.4 608.3,818.1 604.7,818.4" fill="#fd4faf" stroke="#fd4faf" stroke-width="0.7"/><path d="M604.7 871.7L608.3 871.4" stroke="#4a2a3c" stroke-width="0.8" fill="none"/>
<polygon points="801.7,873.5 816.1,864.7 816.1,811.4 801.7,820.2" fill="#f54da9" stroke="#f54da9" stroke-width="0.7"/><path d="M801.7 873.5L816.1 864.7M801.7 873.5L801.7 820.2M816.1 864.7L816.1 811.4" stroke="#4a2a3c" stroke-width="0.8" fill="none"/>
<polygon points="600.9,871.9 604.7,871.7 604.7,818.4 600.9,818.7" fill="#fe50af" stroke="#fe50af" stroke-width="0.7"/><path d="M600.9 871.9L604.7 871.7" stroke="#4a2a3c" stroke-width="0.8" fill="none"/>
<polygon points="597.0,872.1 600.9,871.9 600.9,818.7 597.0,818.8" fill="#fe50af" stroke="#fe50af" stroke-width="0.7"/><path d="M597.0 872.1L600.9 871.9M597.0 872.1L597.0 818.8" stroke="#4a2a3c" stroke-width="0.8" fill="none"/>
<polygon points="826.1,870.4 828.8,871.6 828.8,818.3 826.1,817.2" fill="#ff52b4" stroke="#ff52b4" stroke-width="0.7"/><path d="M826.1 870.4L828.8 871.6M826.1 870.4L826.1 817.2" stroke="#4a2a3c" stroke-width="0.8" fill="none"/>
<polygon points="828.8,871.6 831.8,872.5 831.8,819.3 828.8,818.3" fill="#ff51b3" stroke="#ff51b3" stroke-width="0.7"/><path d="M828.8 871.6L831.8 872.5" stroke="#4a2a3c" stroke-width="0.8" fill="none"/>
<polygon points="853.1,875.6 859.9,869.4 859.9,816.1 853.1,822.3" fill="#f34ca8" stroke="#f34ca8" stroke-width="0.7"/><path d="M853.1 875.6L859.9 869.4M853.1 875.6L853.1 822.3M859.9 869.4L859.9 816.1" stroke="#4a2a3c" stroke-width="0.8" fill="none"/>
<polygon points="831.8,872.5 835.0,873.3 835.0,820.1 831.8,819.3" fill="#ff51b3" stroke="#ff51b3" stroke-width="0.7"/><path d="M831.8 872.5L835.0 873.3" stroke="#4a2a3c" stroke-width="0.8" fill="none"/>
<polygon points="835.0,873.3 838.4,874.0 838.4,820.7 835.0,820.1" fill="#ff51b2" stroke="#ff51b2" stroke-width="0.7"/><path d="M835.0 873.3L838.4 874.0" stroke="#4a2a3c" stroke-width="0.8" fill="none"/>
<polygon points="838.4,874.0 841.9,874.6 841.9,821.3 838.4,820.7" fill="#ff51b2" stroke="#ff51b2" stroke-width="0.7"/><path d="M838.4 874.0L841.9 874.6" stroke="#4a2a3c" stroke-width="0.8" fill="none"/>
<polygon points="841.9,874.6 845.5,875.0 845.5,821.7 841.9,821.3" fill="#ff51b1" stroke="#ff51b1" stroke-width="0.7"/><path d="M841.9 874.6L845.5 875.0" stroke="#4a2a3c" stroke-width="0.8" fill="none"/>
<polygon points="845.5,875.0 849.3,875.3 849.3,822.1 845.5,821.7" fill="#ff50b1" stroke="#ff50b1" stroke-width="0.7"/><path d="M845.5 875.0L849.3 875.3" stroke="#4a2a3c" stroke-width="0.8" fill="none"/>
<polygon points="849.3,875.3 853.1,875.6 853.1,822.3 849.3,822.1" fill="#ff50b1" stroke="#ff50b1" stroke-width="0.7"/><path d="M849.3 875.3L853.1 875.6M853.1 875.6L853.1 822.3" stroke="#4a2a3c" stroke-width="0.8" fill="none"/>
<polygon points="670.3,881.3 688.3,886.4 688.3,833.1 670.3,828.0" fill="#ff51b3" stroke="#ff51b3" stroke-width="0.7"/><path d="M670.3 881.3L688.3 886.4M670.3 881.3L670.3 828.0M688.3 886.4L688.3 833.1" stroke="#4a2a3c" stroke-width="0.8" fill="none"/>
<polygon points="663.7,889.0 670.3,881.3 670.3,828.0 663.7,835.7" fill="#f24ca7" stroke="#f24ca7" stroke-width="0.7"/><path d="M663.7 889.0L670.3 881.3M663.7 889.0L663.7 835.7M670.3 881.3L670.3 828.0" stroke="#4a2a3c" stroke-width="0.8" fill="none"/>
<polygon points="760.4,887.4 778.9,882.8 778.9,829.5 760.4,834.1" fill="#fa4ead" stroke="#fa4ead" stroke-width="0.7"/><path d="M760.4 887.4L778.9 882.8M760.4 887.4L760.4 834.1M778.9 882.8L778.9 829.5" stroke="#4a2a3c" stroke-width="0.8" fill="none"/>
<polygon points="778.9,882.8 784.7,890.6 784.7,837.3 778.9,829.5" fill="#ff52b5" stroke="#ff52b5" stroke-width="0.7"/><path d="M778.9 882.8L784.7 890.6M778.9 882.8L778.9 829.5M784.7 890.6L784.7 837.3" stroke="#4a2a3c" stroke-width="0.8" fill="none"/>
<polygon points="661.7,890.7 663.7,889.0 663.7,835.7 661.7,837.4" fill="#f34ca8" stroke="#f34ca8" stroke-width="0.7"/><path d="M661.7 890.7L663.7 889.0M663.7 889.0L663.7 835.7" stroke="#4a2a3c" stroke-width="0.8" fill="none"/>
<polygon points="714.3,890.2 734.0,890.4 734.0,837.1 714.3,836.9" fill="#ff50b0" stroke="#ff50b0" stroke-width="0.7"/><path d="M714.3 890.2L734.0 890.4M714.3 890.2L714.3 836.9M734.0 890.4L734.0 837.1" stroke="#4a2a3c" stroke-width="0.8" fill="none"/>
<polygon points="659.3,892.2 661.7,890.7 661.7,837.4 659.3,838.9" fill="#f54da9" stroke="#f54da9" stroke-width="0.7"/><path d="M659.3 892.2L661.7 890.7" stroke="#4a2a3c" stroke-width="0.8" fill="none"/>
<polygon points="656.7,893.7 659.3,892.2 659.3,838.9 656.7,840.4" fill="#f64daa" stroke="#f64daa" stroke-width="0.7"/><path d="M656.7 893.7L659.3 892.2" stroke="#4a2a3c" stroke-width="0.8" fill="none"/>
<polygon points="784.7,890.6 786.5,892.4 786.5,839.1 784.7,837.3" fill="#ff52b5" stroke="#ff52b5" stroke-width="0.7"/><path d="M784.7 890.6L786.5 892.4M784.7 890.6L784.7 837.3" stroke="#4a2a3c" stroke-width="0.8" fill="none"/>
<polygon points="653.9,895.1 656.7,893.7 656.7,840.4 653.9,841.8" fill="#f74daa" stroke="#f74daa" stroke-width="0.7"/><path d="M653.9 895.1L656.7 893.7" stroke="#4a2a3c" stroke-width="0.8" fill="none"/>
<polygon points="786.5,892.4 788.7,894.0 788.7,840.7 786.5,839.1" fill="#ff52b5" stroke="#ff52b5" stroke-width="0.7"/><path d="M786.5 892.4L788.7 894.0" stroke="#4a2a3c" stroke-width="0.8" fill="none"/>
<polygon points="712.7,898.8 714.3,890.2 714.3,836.9 712.7,845.5" fill="#9b306b" stroke="#9b306b" stroke-width="0.7"/><path d="M712.7 898.8L714.3 890.2M712.7 898.8L712.7 845.5M714.3 890.2L714.3 836.9" stroke="#4a2a3c" stroke-width="0.8" fill="none"/>
<polygon points="650.8,896.4 653.9,895.1 653.9,841.8 650.8,843.1" fill="#f74eab" stroke="#f74eab" stroke-width="0.7"/><path d="M650.8 896.4L653.9 895.1" stroke="#4a2a3c" stroke-width="0.8" fill="none"/>
<polygon points="734.0,890.4 734.7,899.1 734.7,845.8 734.0,837.1" fill="#993069" stroke="#993069" stroke-width="0.7"/><path d="M734.0 890.4L734.7 899.1M734.0 890.4L734.0 837.1M734.7 899.1L734.7 845.8" stroke="#4a2a3c" stroke-width="0.8" fill="none"/>
<polygon points="788.7,894.0 791.2,895.5 791.2,842.2 788.7,840.7" fill="#ff52b5" stroke="#ff52b5" stroke-width="0.7"/><path d="M788.7 894.0L791.2 895.5" stroke="#4a2a3c" stroke-width="0.8" fill="none"/>
<polygon points="647.6,897.6 650.8,896.4 650.8,843.1 647.6,844.3" fill="#f84eab" stroke="#f84eab" stroke-width="0.7"/><path d="M647.6 897.6L650.8 896.4" stroke="#4a2a3c" stroke-width="0.8" fill="none"/>
<polygon points="631.3,895.5 640.8,899.8 640.8,846.5 631.3,842.2" fill="#ff52b4" stroke="#ff52b4" stroke-width="0.7"/><path d="M631.3 895.5L640.8 899.8M631.3 895.5L631.3 842.2M640.8 899.8L640.8 846.5" stroke="#4a2a3c" stroke-width="0.8" fill="none"/>
<polygon points="791.2,895.5 793.9,897.0 793.9,843.7 791.2,842.2" fill="#ff52b4" stroke="#ff52b4" stroke-width="0.7"/><path d="M791.2 895.5L793.9 897.0" stroke="#4a2a3c" stroke-width="0.8" fill="none"/>
<polygon points="644.3,898.7 647.6,897.6 647.6,844.3 644.3,845.4" fill="#f94eac" stroke="#f94eac" stroke-width="0.7"/><path d="M644.3 898.7L647.6 897.6" stroke="#4a2a3c" stroke-width="0.8" fill="none"/>
<polygon points="640.8,899.8 644.3,898.7 644.3,845.4 640.8,846.5" fill="#f94eac" stroke="#f94eac" stroke-width="0.7"/><path d="M640.8 899.8L644.3 898.7M640.8 899.8L640.8 846.5" stroke="#4a2a3c" stroke-width="0.8" fill="none"/>
<polygon points="793.9,897.0 796.8,898.4 796.8,845.1 793.9,843.7" fill="#ff52b4" stroke="#ff52b4" stroke-width="0.7"/><path d="M793.9 897.0L796.8 898.4" stroke="#4a2a3c" stroke-width="0.8" fill="none"/>
<polygon points="764.5,900.0 764.5,897.9 764.5,844.6 764.5,846.8" fill="#752551" stroke="#752551" stroke-width="0.7"/><path d="M764.5 900.0L764.5 897.9" stroke="#4a2a3c" stroke-width="0.8" fill="none"/>
<polygon points="682.9,898.9 682.9,901.2 682.9,847.9 682.9,845.6" fill="#8d2c61" stroke="#8d2c61" stroke-width="0.7"/><path d="M682.9 898.9L682.9 901.2" stroke="#4a2a3c" stroke-width="0.8" fill="none"/>
<polygon points="711.9,900.9 712.7,898.8 712.7,845.5 711.9,847.6" fill="#c93f8a" stroke="#c93f8a" stroke-width="0.7"/><path d="M711.9 900.9L712.7 898.8M712.7 898.8L712.7 845.5" stroke="#4a2a3c" stroke-width="0.8" fill="none"/>
<polygon points="796.8,898.4 799.8,899.7 799.8,846.4 796.8,845.1" fill="#ff52b4" stroke="#ff52b4" stroke-width="0.7"/><path d="M796.8 898.4L799.8 899.7" stroke="#4a2a3c" stroke-width="0.8" fill="none"/>
<polygon points="734.7,899.1 735.3,901.2 735.3,847.9 734.7,845.8" fill="#c73e89" stroke="#c73e89" stroke-width="0.7"/><path d="M734.7 899.1L735.3 901.2M734.7 899.1L734.7 845.8" stroke="#4a2a3c" stroke-width="0.8" fill="none"/>
<polygon points="806.5,902.0 816.4,898.0 816.4,844.7 806.5,848.8" fill="#f84eab" stroke="#f84eab" stroke-width="0.7"/><path d="M806.5 902.0L816.4 898.0M806.5 902.0L806.5 848.8M816.4 898.0L816.4 844.7" stroke="#4a2a3c" stroke-width="0.8" fill="none"/>
<polygon points="799.8,899.7 803.1,900.9 803.1,847.6 799.8,846.4" fill="#ff52b3" stroke="#ff52b3" stroke-width="0.7"/><path d="M799.8 899.7L803.1 900.9" stroke="#4a2a3c" stroke-width="0.8" fill="none"/>
<polygon points="764.2,902.3 764.5,900.0 764.5,846.8 764.2,849.0" fill="#8f2d63" stroke="#8f2d63" stroke-width="0.7"/><path d="M764.2 902.3L764.5 900.0" stroke="#4a2a3c" stroke-width="0.8" fill="none"/>
<polygon points="710.6,902.9 711.9,900.9 711.9,847.6 710.6,849.6" fill="#ee4ba4" stroke="#ee4ba4" stroke-width="0.7"/><path d="M710.6 902.9L711.9 900.9" stroke="#4a2a3c" stroke-width="0.8" fill="none"/>
<polygon points="682.9,901.2 683.2,903.4 683.2,850.1 682.9,847.9" fill="#a23370" stroke="#a23370" stroke-width="0.7"/><path d="M682.9 901.2L683.2 903.4" stroke="#4a2a3c" stroke-width="0.8" fill="none"/>
<polygon points="735.3,901.2 736.4,903.2 736.4,850.0 735.3,847.9" fill="#ec4aa3" stroke="#ec4aa3" stroke-width="0.7"/><path d="M735.3 901.2L736.4 903.2" stroke="#4a2a3c" stroke-width="0.8" fill="none"/>
<polygon points="803.1,900.9 806.5,902.0 806.5,848.8 803.1,847.6" fill="#ff51b3" stroke="#ff51b3" stroke-width="0.7"/><path d="M803.1 900.9L806.5 902.0M806.5 902.0L806.5 848.8" stroke="#4a2a3c" stroke-width="0.8" fill="none"/>
<polygon points="709.0,904.9 710.6,902.9 710.6,849.6 709.0,851.6" fill="#f24ca7" stroke="#f24ca7" stroke-width="0.7"/><path d="M709.0 904.9L710.6 902.9" stroke="#4a2a3c" stroke-width="0.8" fill="none"/>
<polygon points="763.7,904.5 764.2,902.3 764.2,849.0 763.7,851.2" fill="#a43471" stroke="#a43471" stroke-width="0.7"/><path d="M763.7 904.5L764.2 902.3" stroke="#4a2a3c" stroke-width="0.8" fill="none"/>
<polygon points="683.2,903.4 683.7,905.7 683.7,852.5 683.2,850.1" fill="#b5397d" stroke="#b5397d" stroke-width="0.7"/><path d="M683.2 903.4L683.7 905.7" stroke="#4a2a3c" stroke-width="0.8" fill="none"/>
<polygon points="736.4,903.2 737.8,905.3 737.8,852.0 736.4,850.0" fill="#ff52b3" stroke="#ff52b3" stroke-width="0.7"/><path d="M736.4 903.2L737.8 905.3" stroke="#4a2a3c" stroke-width="0.8" fill="none"/>
<polygon points="707.2,906.9 709.0,904.9 709.0,851.6 707.2,853.6" fill="#f24ca7" stroke="#f24ca7" stroke-width="0.7"/><path d="M707.2 906.9L709.0 904.9" stroke="#4a2a3c" stroke-width="0.8" fill="none"/>
<polygon points="763.0,906.8 763.7,904.5 763.7,851.2 763.0,853.5" fill="#b7397e" stroke="#b7397e" stroke-width="0.7"/><path d="M763.0 906.8L763.7 904.5" stroke="#4a2a3c" stroke-width="0.8" fill="none"/>
<polygon points="683.7,905.7 684.4,908.1 684.4,854.8 683.7,852.5" fill="#c63e88" stroke="#c63e88" stroke-width="0.7"/><path d="M683.7 905.7L684.4 908.1" stroke="#4a2a3c" stroke-width="0.8" fill="none"/>
<polygon points="737.8,905.3 739.4,907.3 739.4,854.0 737.8,852.0" fill="#ff52b5" stroke="#ff52b5" stroke-width="0.7"/><path d="M737.8 905.3L739.4 907.3" stroke="#4a2a3c" stroke-width="0.8" fill="none"/>
<polygon points="705.1,908.8 707.2,906.9 707.2,853.6 705.1,855.5" fill="#f34ca8" stroke="#f34ca8" stroke-width="0.7"/><path d="M705.1 908.8L707.2 906.9" stroke="#4a2a3c" stroke-width="0.8" fill="none"/>
<polygon points="762.0,909.1 763.0,906.8 763.0,853.5 762.0,855.9" fill="#c83f8a" stroke="#c83f8a" stroke-width="0.7"/><path d="M762.0 909.1L763.0 906.8" stroke="#4a2a3c" stroke-width="0.8" fill="none"/>
<polygon points="739.4,907.3 741.2,909.3 741.2,856.0 739.4,854.0" fill="#ff52b5" stroke="#ff52b5" stroke-width="0.7"/><path d="M739.4 907.3L741.2 909.3" stroke="#4a2a3c" stroke-width="0.8" fill="none"/>
<polygon points="684.4,908.1 685.3,910.4 685.3,857.2 684.4,854.8" fill="#d54393" stroke="#d54393" stroke-width="0.7"/><path d="M684.4 908.1L685.3 910.4" stroke="#4a2a3c" stroke-width="0.8" fill="none"/>
<polygon points="702.9,910.7 705.1,908.8 705.1,855.5 702.9,857.4" fill="#f34ca8" stroke="#f34ca8" stroke-width="0.7"/><path d="M702.9 910.7L705.1 908.8" stroke="#4a2a3c" stroke-width="0.8" fill="none"/>
<polygon points="741.2,909.3 743.3,911.3 743.3,858.0 741.2,856.0" fill="#ff52b5" stroke="#ff52b5" stroke-width="0.7"/><path d="M741.2 909.3L743.3 911.3" stroke="#4a2a3c" stroke-width="0.8" fill="none"/>
<polygon points="760.8,911.5 762.0,909.1 762.0,855.9 760.8,858.2" fill="#d74394" stroke="#d74394" stroke-width="0.7"/><path d="M760.8 911.5L762.0 909.1" stroke="#4a2a3c" stroke-width="0.8" fill="none"/>
<polygon points="685.3,910.4 686.4,912.8 686.4,859.5 685.3,857.2" fill="#e3479d" stroke="#e3479d" stroke-width="0.7"/><path d="M685.3 910.4L686.4 912.8M686.4 912.8L686.4 859.5" stroke="#4a2a3c" stroke-width="0.8" fill="none"/>
<polygon points="700.4,912.6 702.9,910.7 702.9,857.4 700.4,859.3" fill="#f44da8" stroke="#f44da8" stroke-width="0.7"/><path d="M700.4 912.6L702.9 910.7" stroke="#4a2a3c" stroke-width="0.8" fill="none"/>
<polygon points="743.3,911.3 745.5,913.2 745.5,859.9 743.3,858.0" fill="#ff52b5" stroke="#ff52b5" stroke-width="0.7"/><path d="M743.3 911.3L745.5 913.2" stroke="#4a2a3c" stroke-width="0.8" fill="none"/>
<polygon points="759.5,913.8 760.8,911.5 760.8,858.2 759.5,860.5" fill="#e5489e" stroke="#e5489e" stroke-width="0.7"/><path d="M759.5 913.8L760.8 911.5M759.5 913.8L759.5 860.5" stroke="#4a2a3c" stroke-width="0.8" fill="none"/>
<polygon points="697.8,914.4 700.4,912.6 700.4,859.3 697.8,861.2" fill="#f54da9" stroke="#f54da9" stroke-width="0.7"/><path d="M697.8 914.4L700.4 912.6M697.8 914.4L697.8 861.2" stroke="#4a2a3c" stroke-width="0.8" fill="none"/>
<polygon points="686.4,912.8 697.8,914.4 697.8,861.2 686.4,859.5" fill="#ff51b2" stroke="#ff51b2" stroke-width="0.7"/><path d="M686.4 912.8L697.8 914.4M686.4 912.8L686.4 859.5M697.8 914.4L697.8 861.2" stroke="#4a2a3c" stroke-width="0.8" fill="none"/>
<polygon points="745.5,913.2 747.9,915.1 747.9,861.8 745.5,859.9" fill="#ff52b5" stroke="#ff52b5" stroke-width="0.7"/><path d="M745.5 913.2L747.9 915.1M747.9 915.1L747.9 861.8" stroke="#4a2a3c" stroke-width="0.8" fill="none"/>
<polygon points="747.9,915.1 759.5,913.8 759.5,860.5 747.9,861.8" fill="#fd4fae" stroke="#fd4fae" stroke-width="0.7"/><path d="M747.9 915.1L759.5 913.8M747.9 915.1L747.9 861.8M759.5 913.8L759.5 860.5" stroke="#4a2a3c" stroke-width="0.8" fill="none"/>
<polygon points="816.1,811.4 826.1,817.2 828.8,818.3 831.8,819.3 835.0,820.1 838.4,820.7 841.9,821.3 845.5,821.7 849.3,822.1 853.1,822.3 859.9,816.1 858.3,813.8 856.6,811.7 854.8,809.6 852.8,807.7 850.7,805.9 848.5,804.2 846.1,802.7 843.5,801.4 831.7,797.2 839.9,785.6 852.6,788.4 855.8,788.8 859.2,788.9 862.6,788.8 866.2,788.6 869.7,788.3 873.4,787.8 877.0,787.2 880.7,786.4 883.4,779.0 880.6,777.4 877.7,775.8 874.8,774.4 871.8,773.1 868.8,771.9 865.7,770.9 862.6,770.1 859.4,769.6 846.0,768.7 846.7,756.0 860.2,755.4 863.4,755.0 866.6,754.3 869.8,753.4 872.9,752.3 876.1,751.1 879.1,749.7 882.2,748.2 885.2,746.6 883.3,739.2 879.7,738.4 876.1,737.6 872.5,737.1 869.0,736.6 865.5,736.3 862.0,736.1 858.7,736.2 855.4,736.5 842.4,738.9 835.5,727.1 847.7,723.3 850.4,722.0 853.0,720.6 855.4,719.0 857.7,717.2 859.9,715.3 861.9,713.3 863.9,711.2 865.7,709.0 859.6,702.7 855.7,702.8 851.9,703.0 848.3,703.3 844.7,703.8 841.3,704.4 838.0,705.1 834.9,706.0 832.0,707.0 821.4,712.5 808.0,703.3 817.0,696.8 818.9,695.0 820.4,693.0 821.7,691.0 822.7,688.8 823.7,686.5 824.4,684.2 824.9,681.7 825.3,679.3 815.8,674.9 812.3,676.0 809.0,677.1 805.8,678.4 802.7,679.7 799.9,681.0 797.3,682.5 794.9,684.1 792.9,685.8 786.3,693.4 768.3,688.3 772.9,680.1 773.5,678.0 773.7,675.8 773.7,673.6 773.4,671.3 772.9,669.0 772.2,666.6 771.3,664.3 770.2,661.9 758.8,660.3 756.2,662.1 753.7,664.0 751.5,665.9 749.4,667.9 747.6,669.8 746.0,671.8 744.7,673.9 743.9,675.9 742.3,684.6 722.6,684.3 721.9,675.6 721.3,673.5 720.2,671.5 718.8,669.4 717.2,667.4 715.4,665.4 713.3,663.5 711.1,661.5 708.7,659.6 697.1,660.9 695.8,663.3 694.6,665.6 693.6,667.9 692.9,670.2 692.4,672.5 692.1,674.7 692.1,676.9 692.5,679.0 696.2,687.3 677.7,691.9 671.9,684.1 670.1,682.4 667.9,680.7 665.4,679.2 662.7,677.7 659.8,676.4 656.8,675.1 653.5,673.8 650.1,672.7 640.2,676.7 640.3,679.2 640.6,681.7 641.1,684.0 641.8,686.3 642.6,688.5 643.7,690.6 645.0,692.6 646.6,694.5 654.9,701.2 640.5,710.0 630.5,704.3 627.8,703.1 624.8,702.2 621.6,701.4 618.2,700.7 614.7,700.2 611.1,699.7 607.3,699.4 603.5,699.2 596.7,705.4 598.3,707.6 600.0,709.8 601.8,711.8 603.8,713.8 605.9,715.6 608.1,717.3 610.5,718.8 613.1,720.1 624.9,724.2 616.7,735.9 604.0,733.0 600.8,732.7 597.4,732.5 594.0,732.6 590.4,732.8 586.9,733.2 583.2,733.7 579.6,734.3 575.9,735.0 573.2,742.4 576.0,744.1 578.9,745.6 581.8,747.1 584.8,748.4 587.8,749.5 590.9,750.5 594.0,751.3 597.2,751.8 610.6,752.7 609.9,765.5 596.4,766.0 593.2,766.5 590.0,767.2 586.8,768.1 583.7,769.2 580.5,770.4 577.5,771.7 574.4,773.2 571.4,774.8 573.3,782.2 576.9,783.1 580.5,783.8 584.1,784.4 587.6,784.8 591.1,785.1 594.6,785.3 597.9,785.3 601.2,785.0 614.2,782.5 621.1,794.4 608.9,798.2 606.2,799.4 603.6,800.8 601.2,802.5 598.9,804.2 596.7,806.1 594.7,808.1 592.7,810.2 590.9,812.4 597.0,818.8 600.9,818.7 604.7,818.4 608.3,818.1 611.9,817.6 615.3,817.1 618.6,816.4 621.7,815.5 624.6,814.4 635.2,808.9 648.6,818.1 639.6,824.7 637.7,826.4 636.2,828.4 634.9,830.5 633.9,832.7 632.9,834.9 632.2,837.3 631.7,839.7 631.3,842.2 640.8,846.5 644.3,845.4 647.6,844.3 650.8,843.1 653.9,841.8 656.7,840.4 659.3,838.9 661.7,837.4 663.7,835.7 670.3,828.0 688.3,833.1 683.7,841.4 683.1,843.5 682.9,845.6 682.9,847.9 683.2,850.1 683.7,852.5 684.4,854.8 685.3,857.2 686.4,859.5 697.8,861.2 700.4,859.3 702.9,857.4 705.1,855.5 707.2,853.6 709.0,851.6 710.6,849.6 711.9,847.6 712.7,845.5 714.3,836.9 734.0,837.1 734.7,845.8 735.3,847.9 736.4,850.0 737.8,852.0 739.4,854.0 741.2,856.0 743.3,858.0 745.5,859.9 747.9,861.8 759.5,860.5 760.8,858.2 762.0,855.9 763.0,853.5 763.7,851.2 764.2,849.0 764.5,846.8 764.5,844.6 764.1,842.5 760.4,834.1 778.9,829.5 784.7,837.3 786.5,839.1 788.7,840.7 791.2,842.2 793.9,843.7 796.8,845.1 799.8,846.4 803.1,847.6 806.5,848.8 816.4,844.7 816.3,842.2 816.0,839.8 815.5,837.4 814.8,835.1 814.0,832.9 812.9,830.8 811.6,828.8 810.0,827.0 801.7,820.2" fill="url(#gtop)" stroke="#3b1a30" stroke-width="0.9"/>
<polygon points="843.9,864.6 847.9,860.5 851.6,856.4 855.0,852.1 858.0,847.8 860.6,843.3 862.9,838.8 864.9,834.2 866.4,829.5 867.6,824.8 868.4,820.1 868.8,815.4 868.8,810.6 868.4,805.9 867.7,801.1 866.5,796.5 865.0,791.8 863.1,787.3 860.9,782.8 858.3,778.3 855.3,774.0 852.0,769.8 848.3,765.7 844.3,761.8 840.0,758.0 835.4,754.3 830.5,750.8 825.3,747.5 819.8,744.3 814.1,741.4 808.2,738.6 802.0,736.1 795.7,733.8 789.1,731.7 782.4,729.8 775.5,728.1 768.6,726.7 761.5,725.5 754.3,724.6 747.0,723.9 739.7,723.5 732.3,723.3 725.0,723.3 717.6,723.6 710.3,724.2 703.0,725.0 695.8,726.0 688.7,727.3 681.7,728.8 674.9,730.6 668.1,732.5 661.6,734.7 655.2,737.2 649.0,739.8 643.0,742.6 637.3,745.7 631.8,748.9 626.6,752.3 621.7,755.8 617.0,759.6 612.7,763.4 608.7,767.5 605.0,771.6 601.6,775.9 598.6,780.2 596.0,784.7 593.7,789.2 591.7,793.8 590.2,798.5 589.0,803.2 588.2,807.9 587.8,812.6 587.8,817.4 588.2,822.1 588.9,826.9 590.1,831.5 591.6,836.2 593.5,840.7 595.7,845.2 598.3,849.7 601.3,854.0 604.6,858.2 608.3,862.3 612.3,866.2 616.6,870.0 621.2,873.7 626.1,877.2 631.3,880.5 636.8,883.7 642.5,886.6 648.4,889.4 654.6,891.9 660.9,894.2 667.5,896.3 674.2,898.2 681.1,899.9 688.0,901.3 695.1,902.5 702.3,903.4 709.6,904.1 716.9,904.5 724.3,904.7 731.6,904.7 739.0,904.4 746.3,903.8 753.6,903.0 760.8,902.0 767.9,900.7 774.9,899.2 781.7,897.4 788.5,895.5 795.0,893.3 801.4,890.8 807.6,888.2 813.6,885.4 819.3,882.3 824.8,879.1 830.0,875.7 834.9,872.2 839.6,868.4" fill="none" stroke="#f7b0d0" stroke-width="1" stroke-dasharray="5 4" opacity="0.45" clip-path="url(#gtopclip)"/>
<defs><clipPath id="gtopclip"><polygon points="816.1,811.4 826.1,817.2 828.8,818.3 831.8,819.3 835.0,820.1 838.4,820.7 841.9,821.3 845.5,821.7 849.3,822.1 853.1,822.3 859.9,816.1 858.3,813.8 856.6,811.7 854.8,809.6 852.8,807.7 850.7,805.9 848.5,804.2 846.1,802.7 843.5,801.4 831.7,797.2 839.9,785.6 852.6,788.4 855.8,788.8 859.2,788.9 862.6,788.8 866.2,788.6 869.7,788.3 873.4,787.8 877.0,787.2 880.7,786.4 883.4,779.0 880.6,777.4 877.7,775.8 874.8,774.4 871.8,773.1 868.8,771.9 865.7,770.9 862.6,770.1 859.4,769.6 846.0,768.7 846.7,756.0 860.2,755.4 863.4,755.0 866.6,754.3 869.8,753.4 872.9,752.3 876.1,751.1 879.1,749.7 882.2,748.2 885.2,746.6 883.3,739.2 879.7,738.4 876.1,737.6 872.5,737.1 869.0,736.6 865.5,736.3 862.0,736.1 858.7,736.2 855.4,736.5 842.4,738.9 835.5,727.1 847.7,723.3 850.4,722.0 853.0,720.6 855.4,719.0 857.7,717.2 859.9,715.3 861.9,713.3 863.9,711.2 865.7,709.0 859.6,702.7 855.7,702.8 851.9,703.0 848.3,703.3 844.7,703.8 841.3,704.4 838.0,705.1 834.9,706.0 832.0,707.0 821.4,712.5 808.0,703.3 817.0,696.8 818.9,695.0 820.4,693.0 821.7,691.0 822.7,688.8 823.7,686.5 824.4,684.2 824.9,681.7 825.3,679.3 815.8,674.9 812.3,676.0 809.0,677.1 805.8,678.4 802.7,679.7 799.9,681.0 797.3,682.5 794.9,684.1 792.9,685.8 786.3,693.4 768.3,688.3 772.9,680.1 773.5,678.0 773.7,675.8 773.7,673.6 773.4,671.3 772.9,669.0 772.2,666.6 771.3,664.3 770.2,661.9 758.8,660.3 756.2,662.1 753.7,664.0 751.5,665.9 749.4,667.9 747.6,669.8 746.0,671.8 744.7,673.9 743.9,675.9 742.3,684.6 722.6,684.3 721.9,675.6 721.3,673.5 720.2,671.5 718.8,669.4 717.2,667.4 715.4,665.4 713.3,663.5 711.1,661.5 708.7,659.6 697.1,660.9 695.8,663.3 694.6,665.6 693.6,667.9 692.9,670.2 692.4,672.5 692.1,674.7 692.1,676.9 692.5,679.0 696.2,687.3 677.7,691.9 671.9,684.1 670.1,682.4 667.9,680.7 665.4,679.2 662.7,677.7 659.8,676.4 656.8,675.1 653.5,673.8 650.1,672.7 640.2,676.7 640.3,679.2 640.6,681.7 641.1,684.0 641.8,686.3 642.6,688.5 643.7,690.6 645.0,692.6 646.6,694.5 654.9,701.2 640.5,710.0 630.5,704.3 627.8,703.1 624.8,702.2 621.6,701.4 618.2,700.7 614.7,700.2 611.1,699.7 607.3,699.4 603.5,699.2 596.7,705.4 598.3,707.6 600.0,709.8 601.8,711.8 603.8,713.8 605.9,715.6 608.1,717.3 610.5,718.8 613.1,720.1 624.9,724.2 616.7,735.9 604.0,733.0 600.8,732.7 597.4,732.5 594.0,732.6 590.4,732.8 586.9,733.2 583.2,733.7 579.6,734.3 575.9,735.0 573.2,742.4 576.0,744.1 578.9,745.6 581.8,747.1 584.8,748.4 587.8,749.5 590.9,750.5 594.0,751.3 597.2,751.8 610.6,752.7 609.9,765.5 596.4,766.0 593.2,766.5 590.0,767.2 586.8,768.1 583.7,769.2 580.5,770.4 577.5,771.7 574.4,773.2 571.4,774.8 573.3,782.2 576.9,783.1 580.5,783.8 584.1,784.4 587.6,784.8 591.1,785.1 594.6,785.3 597.9,785.3 601.2,785.0 614.2,782.5 621.1,794.4 608.9,798.2 606.2,799.4 603.6,800.8 601.2,802.5 598.9,804.2 596.7,806.1 594.7,808.1 592.7,810.2 590.9,812.4 597.0,818.8 600.9,818.7 604.7,818.4 608.3,818.1 611.9,817.6 615.3,817.1 618.6,816.4 621.7,815.5 624.6,814.4 635.2,808.9 648.6,818.1 639.6,824.7 637.7,826.4 636.2,828.4 634.9,830.5 633.9,832.7 632.9,834.9 632.2,837.3 631.7,839.7 631.3,842.2 640.8,846.5 644.3,845.4 647.6,844.3 650.8,843.1 653.9,841.8 656.7,840.4 659.3,838.9 661.7,837.4 663.7,835.7 670.3,828.0 688.3,833.1 683.7,841.4 683.1,843.5 682.9,845.6 682.9,847.9 683.2,850.1 683.7,852.5 684.4,854.8 685.3,857.2 686.4,859.5 697.8,861.2 700.4,859.3 702.9,857.4 705.1,855.5 707.2,853.6 709.0,851.6 710.6,849.6 711.9,847.6 712.7,845.5 714.3,836.9 734.0,837.1 734.7,845.8 735.3,847.9 736.4,850.0 737.8,852.0 739.4,854.0 741.2,856.0 743.3,858.0 745.5,859.9 747.9,861.8 759.5,860.5 760.8,858.2 762.0,855.9 763.0,853.5 763.7,851.2 764.2,849.0 764.5,846.8 764.5,844.6 764.1,842.5 760.4,834.1 778.9,829.5 784.7,837.3 786.5,839.1 788.7,840.7 791.2,842.2 793.9,843.7 796.8,845.1 799.8,846.4 803.1,847.6 806.5,848.8 816.4,844.7 816.3,842.2 816.0,839.8 815.5,837.4 814.8,835.1 814.0,832.9 812.9,830.8 811.6,828.8 810.0,827.0 801.7,820.2"/></clipPath><linearGradient id="gtop" x1="0" y1="0" x2="1" y2="1"><stop offset="0" stop-color="#ff5fd0"/><stop offset="1" stop-color="#fd5ac8"/></linearGradient><radialGradient id="holeg" cx="0.5" cy="0.3" r="0.7"><stop offset="0" stop-color="#b04a88"/><stop offset="1" stop-color="#5a1a44"/></radialGradient></defs>
<circle cx="728.3" cy="814.0" r="5" fill="none" stroke="#f4a0a8" stroke-width="1.6" opacity="0.8"/>
<polygon points="739.1,765.5 740.2,764.3 740.9,763.0 741.4,761.7 741.5,760.4 741.3,759.1 740.7,757.8 739.9,756.6 738.8,755.5 737.4,754.5 735.8,753.7 734.0,753.0 732.1,752.5 730.1,752.3 728.0,752.2 725.9,752.4 723.9,752.7 722.0,753.3 720.3,754.0 718.8,754.9 717.5,756.0 716.4,757.1 715.7,758.4 715.2,759.7 715.1,761.0 715.3,762.4 715.9,763.6 716.7,764.9 717.8,766.0 719.2,767.0 720.8,767.8 722.6,768.4 724.5,768.9 726.5,769.2 728.6,769.2 730.7,769.1 732.7,768.7 734.6,768.2 736.3,767.4 737.8,766.5" fill="url(#holeg)" stroke="#3b1a30" stroke-width="1"/>
<defs><linearGradient id="endf" x1="0" y1="0" x2="1" y2="0"><stop offset="0" stop-color="#f9b0e0"/><stop offset="1" stop-color="#fda6dc"/></linearGradient></defs>
<polygon points="845.0,835.0 1449.9,283.1 1449.9,379.5 845.0,931.6" fill="#fe9dd3" stroke="#4a2a40" stroke-width="0.9" stroke-linejoin="round"/>
<polygon points="780.7,805.5 845.0,835.0 1449.9,283.1 1385.9,254.0" fill="#feaeea" stroke="#4a2a40" stroke-width="0.9" stroke-linejoin="round"/>
<path d="M780.7 805.5L845.0 835.0L845.0 931.6L780.7 902.2Z M780.8 825.7L828.0 847.3L828.0 923.8L780.7 902.2Z" fill="url(#endf)" fill-rule="evenodd" stroke="#4a2a40" stroke-width="0.9" stroke-linejoin="round"/>
<polygon points="815.8,841.7 828,847.3 828,903.2 815.8,897.6" fill="#f0b6dc" stroke="#4a2a40" stroke-width="0.8"/>
<polygon points="815.8,887 828,895.5 828,903.2 815.8,897.6" fill="#dc9cc4"/>
<defs><filter id="vcb" x="-50%" y="-50%" width="200%" height="200%"><feGaussianBlur stdDeviation="6"/></filter><linearGradient id="vcf" x1="0" y1="0" x2="0.3" y2="1"><stop offset="0" stop-color="#f1f1f1"/><stop offset="1" stop-color="#e2e2e2"/></linearGradient><linearGradient id="vcr" x1="0" y1="0" x2="0" y2="1"><stop offset="0" stop-color="#ececec"/><stop offset="1" stop-color="#dcdcdc"/></linearGradient></defs>
<polygon points="1895,205 1938,226 1975,200 1950,185" fill="#000" opacity="0.28" filter="url(#vcb)"/>
<polygon points="1885.3,154.0 1933.7,170.4 1933.7,218.2 1889.0,196.8" fill="url(#vcf)" stroke="#d4d4d4" stroke-width="0.8"/>
<polygon points="1933.7,170.4 1966.4,145.2 1962.0,190.5 1933.7,218.2" fill="url(#vcr)" stroke="#d4d4d4" stroke-width="0.8"/>
<polygon points="1885.3,154.0 1919.9,127.6 1966.4,145.2 1933.7,170.4" fill="#efefef" stroke="#d6d6d6" stroke-width="0.8"/>
<rect x="1924" y="166" width="16" height="16" fill="#e4e6ea" opacity="0.8" transform="skewY(-20) translate(0 700)"/>
<text x="0" y="0" font-family="Liberation Sans" font-weight="bold" font-size="9.5" fill="#8d9197" transform="translate(1915 149) rotate(22) skewX(-20)">TOP</text>
<text x="0" y="0" font-family="Liberation Sans" font-weight="bold" font-size="9.5" fill="#8d9197" transform="translate(1893 188) rotate(24)">FRONT</text>
<text x="0" y="0" font-family="Liberation Sans" font-weight="bold" font-size="8.5" fill="#8d9197" transform="translate(1941 197) rotate(-52) skewX(-10)">RIGHT</text>
<path d="M1889 196L1882.8 146" stroke="#6a6cf5" stroke-width="1.4"/>
<path d="M1889 196L1940.6 225" stroke="#f77a7a" stroke-width="1.4"/>
<text x="1875.5" y="143.5" font-family="Liberation Sans" font-size="17" fill="#6a6cf5">Z</text>
<text x="1942.5" y="236" font-family="Liberation Sans" font-size="17" fill="#f76a6a">X</text>
<rect x="863" y="1080" width="277" height="28" fill="#efefef"/>
<path d="M875 1101V1087" stroke="#888" stroke-width="3.2"/><path d="M875 1101V1087" stroke="#f4f4f4" stroke-width="1.6"/><path d="M871 1089L875 1084L879 1089z" fill="#f4f4f4" stroke="#777" stroke-width="1"/><ellipse cx="875" cy="1095" rx="8" ry="3.2" fill="none" stroke="#333" stroke-width="1.2"/>
<path d="M890 1092.5H897L893.5 1096.5z" fill="#222"/>
<rect x="906" y="1088" width="17" height="13" fill="#d6d6d6" stroke="#666" stroke-width="1.1"/><rect x="909" y="1092" width="11" height="6" fill="#9aa3ad"/><path d="M908 1087L912 1083L921 1085" stroke="#666" stroke-width="1.2" fill="none"/>
<path d="M937 1093C935 1090 938 1089 940 1092V1084C940 1082 943 1082 943 1084V1083C943 1081 946 1081 946 1083V1084C946 1082 949 1082 949 1084V1086C949 1084 952 1084 952 1086V1096C952 1101 949 1103 945 1103C941 1103 940 1101 937 1093z" fill="#fafafa" stroke="#555" stroke-width="1.1"/>
<circle cx="972" cy="1092" r="5.8" fill="#e8f4f6" stroke="#333" stroke-width="1.3"/><path d="M976 1096L982 1101.5" stroke="#333" stroke-width="2.4"/><path d="M979 1086H984M981.5 1083.5V1088.5" stroke="#333" stroke-width="1"/>
<rect x="996" y="1085" width="17" height="17" fill="none" stroke="#888" stroke-width="0.9" stroke-dasharray="2 1.5"/><circle cx="1003" cy="1092" r="5.8" fill="#e8f4f6" stroke="#333" stroke-width="1.3"/><path d="M1007 1096L1013 1101.5" stroke="#333" stroke-width="2.4"/>
<path d="M1021 1092.5H1028L1024.5 1096.5z" fill="#222"/>
<rect x="1035.5" y="1084.5" width="17" height="14" rx="1" fill="#7aa8d8" stroke="#777" stroke-width="1.2"/><rect x="1038" y="1087" width="12" height="9" fill="#8ab8e6"/><path d="M1040 1102H1048L1046 1099H1042z" fill="#999"/>
<path d="M1056 1092.5H1063L1059.5 1096.5z" fill="#222"/>
<rect x="1072.5" y="1085.5" width="17" height="17" fill="#e4e7eb" stroke="#6c737c" stroke-width="1"/><path d="M1074.5 1085V1102M1076.5 1085V1102M1078.5 1085V1102M1080.5 1085V1102M1082.5 1085V1102M1084.5 1085V1102M1086.5 1085V1102M1088.5 1085V1102M1072 1087.5H1089M1072 1089.5H1089M1072 1091.5H1089M1072 1093.5H1089M1072 1095.5H1089M1072 1097.5H1089M1072 1099.5H1089M1072 1101.5H1089" stroke="#8d949d" stroke-width="0.9"/>
<path d="M1092 1092.5H1099L1095.5 1096.5z" fill="#222"/>
<rect x="1107.5" y="1086" width="17" height="15.5" rx="1" fill="#6e9fd8" stroke="#5a8ac4" stroke-width="1"/><path d="M1116 1086V1101.5M1107.5 1093.7H1124.5" stroke="#cfe0f4" stroke-width="1.2"/>
<path d="M1128 1092.5H1135L1131.5 1096.5z" fill="#222"/>
</svg><div id="tb">
<div id="design"><span>DESIGN</span><i></i></div>
<div class="tab" style="left:175px;color:#1f9ad8">SOLID</div>
<div class="abs" style="left:162px;top:22px;width:66px;height:3px;background:#1f96dc"></div>
<div class="tab" style="left:266px">SURFACE</div>
<div class="tab" style="left:375px">MESH</div>
<div class="tab" style="left:461px">SHEET METAL</div>
<div class="tab" style="left:599px">PLASTIC</div>
<div class="tab" style="left:702px">MANAGE</div>
<div class="tab" style="left:811px">UTILITIES</div>
<div class="grp" style="left:323px">CREATE<i></i></div>
<div class="grp" style="left:712px">MODIFY<i></i></div>
<div class="grp" style="left:1022px">ASSEMBLE<i></i></div>
<div class="grp" style="left:1208px">CONFIGURE<i></i></div>
<div class="grp" style="left:1329px">CONSTRUCT<i></i></div>
<div class="grp" style="left:1450px">INSPECT<i></i></div>
<div class="grp" style="left:1553px">INSERT<i></i></div>
<div class="grp" style="left:1656px">SELECT<i></i></div>
<div class="grp" style="left:1747px">POSITION<i></i></div>
<div class="sep" style="left:561px"></div>
<div class="sep" style="left:927px"></div>
<div class="sep" style="left:1191px"></div>
<div class="sep" style="left:1312px"></div>
<div class="sep" style="left:1433px"></div>
<div class="sep" style="left:1526px"></div>
<div class="sep" style="left:1640px"></div>
<div class="sep" style="left:1726px"></div>
<svg width="2000" height="94" viewBox="0 0 2000 94">
<defs>
<linearGradient id="gb" x1="0" y1="0" x2="0" y2="1"><stop offset="0" stop-color="#e9e9e9"/><stop offset="1" stop-color="#cfcfcf"/></linearGradient>
</defs>
<!-- sketch -->
<g stroke="#4a4a4a" stroke-width="1.2" fill="none">
<path d="M165 30.8H192M165 62.8H181M161.8 34V59M193.8 34V49" />
<path d="M172 39H183.5M170 41V53M173 55C180 54 185 49 186 41"/>
</g>
<g fill="#4a4a4a"><rect x="160" y="29" width="3.4" height="3.4"/><rect x="192" y="29" width="3.4" height="3.4"/><rect x="160" y="61" width="3.4" height="3.4"/><rect x="168.5" y="37.3" width="3.2" height="3.2"/><rect x="183.5" y="37.3" width="3.2" height="3.2"/><rect x="168.5" y="53" width="3.2" height="3.2"/></g>
<path d="M181.5 55.6h6v-6h4.6v6h6v4.6h-6v6h-4.6v-6h-6z" fill="#16a637"/>
<!-- extrude -->
<path d="M212 60.8H232L240 53V59L232 66.4H212z" fill="#b8b8b8"/>
<path d="M232 60.8L240 53V59L232 66.4z" fill="#9e9e9e"/>
<path d="M212 36L219 29H240L233 36z" fill="#7fcffa"/>
<path d="M212 36H233V60.8H212z" fill="#4cb2ea"/>
<path d="M233 36L240 29V53L233 60.8z" fill="#1d93d2"/>
<path d="M244 59V33" stroke="#333" stroke-width="1.3"/><path d="M240.5 36L244 30L247.5 36z" fill="#333"/>
<!-- revolve -->
<path d="M268 36C276 29 288 29 296 34" stroke="#333" stroke-width="1.3" fill="none"/><path d="M262 38L270 31L271 38z" fill="#333"/>
<path d="M261 45C270 38 286 38 297 45V60C287 52 271 52 268 63L261 55z" fill="#4cb2ea"/>
<path d="M261 45C270 38 286 38 297 45L291 50C282 45 273 45 268 50z" fill="#7fcffa"/>
<path d="M261 45L268 50V63L261 55z" fill="#1d93d2"/>
<path d="M292 50L298 46V57L292 61z" fill="#fff" stroke="#444" stroke-width="1.2"/>
<!-- hole -->
<path d="M311 37L319 29H349V58L341 66H311z" fill="#d9d9d9" stroke="#555" stroke-width="1.3"/>
<path d="M341 37L349 29V58L341 66z" fill="#bdbdbd"/>
<path d="M311 37H341V66" stroke="#777" stroke-width="1" fill="none"/>
<circle cx="326" cy="51" r="9.5" fill="#e8e8e8" stroke="#555" stroke-width="1.2"/>
<path d="M320 45C317 51 320 58 327 58C332 58 335 55 335 51C331 54 325 53 322 49C321 47 321 46 320 45z" fill="#4cb2ea"/>
<!-- rectangular pattern -->
<g stroke="#555" stroke-width="1.2" fill="none"><path d="M369 35H383M366 38V58M369 61H383"/></g>
<rect x="362" y="32" width="7" height="7" fill="#fff" stroke="#555" stroke-width="1.2"/>
<rect x="383" y="32" width="8" height="7" fill="#4cb2ea"/><rect x="362" y="57" width="8" height="7" fill="#4cb2ea"/><rect x="383" y="57" width="8" height="7" fill="#4cb2ea"/>
<!-- form (purple) -->
<rect x="412.5" y="31.5" width="34" height="35" rx="8" fill="#b888f2" stroke="#9a62dc" stroke-width="1.2"/>
<path d="M437 44L446 40V58C446 63 442 66.5 437 66.5z" fill="#9d6ee2"/>
<path d="M413 52H437M425 32V66M437 44V66" stroke="#9a62dc" stroke-width="1" fill="none"/>
<path d="M413 40C414 34 418 32 425 32H437L430 38H420C416 38 414 39 413 42z" fill="#cfaaf8" opacity="0.8"/>
<path d="M439.5 30L441.7 35.5L447 33.5L445 39L450.5 41L445 43L447 48.5L441.7 46.5L439.5 52L437.3 46.5L432 48.5L434 43L428.5 41L434 39L432 33.5L437.3 35.5z" fill="#f59b00"/>
<!-- coil -->
<path d="M467 41L495 46V51L467 46zM467 53L495 58V62L467 57z" fill="#2a95d4"/>
<path d="M467 36.5L495 31V36L467 41.5zM467 48L495 42.5V47.5L467 53zM467 59.5L495 54V59L467 64.5z" fill="#4cb4ec"/>
<!-- gear highlighted -->
<rect x="508.5" y="25" width="45.5" height="45.5" fill="#0a8be0"/>
<path d="M512 66V59L515 63L518 58L521 63L524 57L527 62L530 57L533 62L536 57L539 63L542 58L545 63L548 58L551 62V66z" fill="#4cc6f7"/>
<g fill="#80dcff" transform="translate(531.5 47)">
<circle r="10"/>
<rect x="-2.6" y="-15" width="5.2" height="7" rx="2.2" transform="rotate(0)"/><rect x="-2.6" y="-15" width="5.2" height="7" rx="2.2" transform="rotate(30)"/><rect x="-2.6" y="-15" width="5.2" height="7" rx="2.2" transform="rotate(60)"/><rect x="-2.6" y="-15" width="5.2" height="7" rx="2.2" transform="rotate(90)"/><rect x="-2.6" y="-15" width="5.2" height="7" rx="2.2" transform="rotate(120)"/><rect x="-2.6" y="-15" width="5.2" height="7" rx="2.2" transform="rotate(150)"/><rect x="-2.6" y="-15" width="5.2" height="7" rx="2.2" transform="rotate(180)"/><rect x="-2.6" y="-15" width="5.2" height="7" rx="2.2" transform="rotate(210)"/><rect x="-2.6" y="-15" width="5.2" height="7" rx="2.2" transform="rotate(240)"/><rect x="-2.6" y="-15" width="5.2" height="7" rx="2.2" transform="rotate(270)"/><rect x="-2.6" y="-15" width="5.2" height="7" rx="2.2" transform="rotate(300)"/><rect x="-2.6" y="-15" width="5.2" height="7" rx="2.2" transform="rotate(330)"/></g>
<circle cx="531.5" cy="47" r="2" fill="#0a8be0"/>
<!-- press pull -->
<path d="M577.5 35L582 29.5H590V66.5H577.5z" fill="#dadada" stroke="#555" stroke-width="1.2"/>
<path d="M585.5 35.5L590.5 29.5H603L597.5 35.5z" fill="#7fcffa"/><path d="M585.5 35.5H597.5V66.5H585.5z" fill="#4cb2ea"/><path d="M597.5 35.5L603 29.5V60.5L597.5 66.5z" fill="#1d93d2"/>
<path d="M599 47.5H608" stroke="#222" stroke-width="1.3"/><path d="M607 44.3L611.5 47.5L607 50.7z" fill="#222"/>
<!-- fillet -->
<path d="M626.5 37L633.5 29.5H652L663 40.5V58.5L655 66.5H626.5z" fill="#d9d9d9" stroke="#555" stroke-width="1.2"/>
<path d="M655 49L663 42V58.5L655 66.5z" fill="#bfbfbf"/>
<path d="M641 29.5C653 29.5 663 39 663 46L655 51C655 43 649 37 641 36z" fill="#4cb2ea"/>
<!-- shell -->
<path d="M677 37L684 30H714V59L707 66H677z" fill="#e6e6e6" stroke="#555" stroke-width="1.2"/>
<path d="M707 37L714 30V59L707 66z" fill="#c4c4c4"/>
<path d="M680 40H704V62H680z" fill="#d2d2d2"/>
<path d="M681 41H690V54H703V62H681z" fill="#1d93d2"/><path d="M690 54H703V62H683z" fill="#7fcffa"/>
<!-- combine -->
<path d="M726.5 47L732 41.5H740.5V35.5L746 29.5H764V50L758.5 55.5H752.5V66.5H726.5z" fill="#4cb2ea"/>
<path d="M740.5 35.5L746 29.5H764L758.5 35.5z M726.5 47L732 41.5H740.5V47z" fill="#7fcffa"/>
<path d="M758.5 35.5L764 29.5V50L758.5 55.5zM752.5 55.5L758.5 55.5L752.5 61z" fill="#1d93d2"/>
<!-- offset face -->
<path d="M779 50H812L818 44" stroke="#1f96dc" stroke-width="1.5" fill="none"/>
<path d="M780 53H811V66H780z" fill="#d9d9d9" stroke="#555" stroke-width="1.2"/><path d="M811 53L816 49V61L811 66z" fill="#bdbdbd"/>
<path d="M780 35L786 29H816L810 35z" fill="#7fcffa"/><path d="M780 35H810V47H780z" fill="#4cb2ea"/><path d="M810 35L816 29V42L810 47z" fill="#1d93d2"/>
<!-- move -->
<path d="M846 32V62M831 47H861" stroke="#2d2d2d" stroke-width="2.2"/>
<path d="M846 29L851 37H841zM846 66L851 58H841zM828 47L836 42V52zM864 47L856 42V52z" fill="#2d2d2d"/>
<!-- fx -->
<text x="878" y="61" font-family="Liberation Serif" font-style="italic" font-size="38" fill="#5a5a5a">fx</text>
<!-- new component -->
<path d="M946 40V67H972L978 61V35H953z" fill="#dcdcdc" stroke="#555" stroke-width="1.2"/>
<path d="M972 41L978 35V61L972 67z" fill="#bdbdbd"/>
<path d="M941 35H952V30L962 37L952 44V39H941z" fill="#1d8de0"/>
<path d="M961 61L967 55A3 3 0 0 1 972 60L966 66A3 3 0 0 1 961 61zM966 57L971 52A3 3 0 0 1 976 57L971 62" stroke="#222" stroke-width="2.3" fill="none"/>
<!-- joint -->
<path d="M991 52H1006V67H991zM1006 52L1011 49H1022V62L1017 67H1006z" fill="#dcdcdc" stroke="#555" stroke-width="1.2"/>
<path d="M991 39L996 34H1010L1006 39z" fill="#7fcffa"/><path d="M991 39H1006V52H991z" fill="#4cb2ea"/><path d="M1006 39L1010 34V48L1006 52z" fill="#1d93d2"/>
<path d="M1018 30L1020 35L1025 33L1023 38L1028 40L1023 42L1025 47L1020 45L1018 50L1016 45L1011 47L1013 42L1008 40L1013 38L1011 33L1016 35z" fill="#f59b00"/>
<!-- as-built / ground -->
<path d="M1041 50H1058V63H1041z" fill="#fff" stroke="#555" stroke-width="1.3"/>
<path d="M1060 32V64" stroke="#e0202a" stroke-width="1.3"/>
<rect x="1062" y="32" width="16" height="14" fill="#4cb2ea"/>
<!-- bom/table -->
<rect x="1092" y="29" width="8" height="7" fill="#4cb2ea"/>
<path d="M1092 36H1106V44H1092zM1099 36V44" fill="#fff" stroke="#555" stroke-width="1.1"/>
<path d="M1097 45V64M1097 49H1107M1097 55H1107M1097 61H1107" stroke="#777" stroke-width="1" fill="none"/>
<path d="M1110 39H1129V67H1110z" fill="#fff" stroke="#555" stroke-width="1.2"/>
<rect x="1110" y="39" width="19" height="3" fill="#555"/>
<path d="M1110 47H1129M1110 52H1129M1110 57H1129M1110 62H1129M1114 42V67" stroke="#888" stroke-width="1" fill="none"/>
<!-- motion / contact -->
<path d="M1144.5 41V63L1155 54V36C1155 33 1152 32 1150 33C1147 34 1144.5 37 1144.5 41z" fill="#dcdcdc" stroke="#555" stroke-width="1.2"/>
<path d="M1151 33.5C1154 32 1159 33 1159 36V53L1155 54V36z" fill="#c8c8c8" stroke="#555" stroke-width="1"/>
<path d="M1169 34.5L1177 42.5V61L1169 64z" fill="#dcdcdc" stroke="#555" stroke-width="1.2"/>
<path d="M1162.5 45V56.5C1162.5 58 1169 58 1169 56.5V45C1169 43.5 1162.5 43.5 1162.5 45z" fill="#d2d2d2" stroke="#555" stroke-width="1"/>
<path d="M1157 37V53M1165.5 38V47" stroke="#1f96dc" stroke-width="1.2"/>
<!-- configure -->
<path d="M1209 37L1216 29H1240V60H1209z" fill="#e2e2e2" stroke="#c2c2c2" stroke-width="1"/>
<path d="M1230 56H1245M1230 64H1245M1234 53V59M1239 61V67" stroke="#999" stroke-width="1.6"/>
<circle cx="1237" cy="38.5" r="9" fill="#0b84e0"/>
<path d="M1237 33L1241 38H1238.5V44H1235.5V38H1233z" fill="#fff"/>
<path d="M1259 29H1293V62H1259z" fill="#e6e6e6" stroke="#aaa" stroke-width="1.1"/>
<path d="M1259 29H1293V34H1259z" fill="#bbb"/>
<path d="M1263 39H1288M1263 45H1288M1263 51H1280M1268 36V56M1275 36V56" stroke="#aaa" stroke-width="1" fill="none"/>
<path d="M1280 56H1296M1280 64H1296M1284 53V59M1290 61V67" stroke="#999" stroke-width="1.6"/>
<circle cx="1287" cy="38.5" r="9" fill="#0b84e0"/>
<path d="M1287 33L1291 38H1288.5V44H1285.5V38H1283z" fill="#fff"/>
<!-- construct -->
<path d="M1331 50L1336 44.5H1346V64H1331z" fill="#dcdcdc" stroke="#555" stroke-width="1.2"/>
<path d="M1345.4 30.8L1363.8 49.2L1349.4 60.4L1334.2 42z" fill="#f0955a"/>
<path d="M1338 43H1352L1348 49z" fill="#f6c8a8"/>
<path d="M1346 60L1346 50L1356 42" stroke="#1cc46b" stroke-width="1.6" fill="none"/>
<path d="M1345 64V57L1350 60z" fill="#1cc46b"/>
<path d="M1381 38L1387 29H1395L1391 34V67H1381z" fill="#dcdcdc" stroke="#555" stroke-width="1.2"/>
<path d="M1392 40L1402 30V60L1392 67z" fill="#10c068"/>
<path d="M1406 44L1416 31V59L1406 69z" fill="#f0955a"/>
<!-- inspect -->
<path d="M1464 37V45M1497 37V45M1466 41H1495" stroke="#555" stroke-width="1.3"/>
<path d="M1465 41L1470 38V44zM1496 41L1491 38V44z" fill="#555"/>
<rect x="1464" y="48" width="34" height="8" fill="#f59b00"/>
<path d="M1468 48V51M1473 48V51M1478 48V51M1483 48V51M1488 48V51M1493 48V51" stroke="#b36a00" stroke-width="1"/>
<!-- insert -->
<path d="M1543 33L1547 30H1569V39H1543z" fill="#6ac0f0"/>
<path d="M1549 39H1563V64H1549z" fill="#6ac0f0"/>
<path d="M1550 43H1562M1550 47H1562M1550 51H1562M1550 55H1562M1550 59H1562" stroke="#3d9ed8" stroke-width="1"/>
<path d="M1562 52h5v-5h4.5v5h5v4.5h-5v5h-4.5v-5h-5z" fill="#16a637"/>
<rect x="1591.5" y="30" width="34" height="34" fill="#6fcbfb" stroke="#1a8ed4" stroke-width="1"/>
<path d="M1592 63V53C1596 44 1602 43 1607 51C1611 57 1613 56 1618 50C1622 47 1624 51 1625 55V63z" fill="#0a94d8"/>
<circle cx="1616" cy="39" r="3.6" fill="#f9f2b0"/>
<!-- select -->
<rect x="1665" y="29.5" width="32" height="25" fill="none" stroke="#22bb3a" stroke-width="1.3" stroke-dasharray="3 2"/>
<path d="M1690 47V64L1694 60L1697 66L1700 65L1697 59H1702z" fill="#fff" stroke="#333" stroke-width="1.1"/>
<!-- position -->
<rect x="1741" y="29.5" width="15" height="37" fill="#fff" stroke="#666" stroke-width="1.3"/>
<rect x="1756" y="29.5" width="21" height="16" fill="#4cb2ea" stroke="#3a9ad4" stroke-width="1"/>
<rect x="1791" y="29.5" width="15" height="37" fill="none" stroke="#666" stroke-width="1.3"/>
<rect x="1806" y="29.5" width="21" height="16" fill="none" stroke="#777" stroke-width="1.3" stroke-dasharray="3 2"/>
</svg>
</div>
<div id="bh"><svg width="30" height="28" viewBox="0 0 30 28" style="left:0;top:0"><path d="M5 13.5L11 9.5V17.5zM11 13.5L17 9.5V17.5z" fill="#2a2a2a"/></svg><span>BROWSER</span><svg width="20" height="28" viewBox="0 0 20 28" style="left:325px;top:0"><circle cx="6" cy="13.5" r="5.6" fill="#2a2a2a"/><rect x="2.8" y="12.6" width="6.4" height="1.8" fill="#fff"/></svg></div>
<svg width="400" height="700" viewBox="0 0 400 700"><rect x="40" y="136.5" width="148" height="23" fill="#fff" opacity="0.6"/><rect x="47" y="136.5" width="141" height="23" fill="#ececec"/><path d="M26 152.5L34 144.5V152.5z" fill="#2a2a2a"/><rect x="49.5" y="139" width="3.5" height="19" fill="#c27dff"/><path d="M56.5 148C61.5 141 70.5 141 75.5 148C70.5 155 61.5 155 56.5 148z" fill="#8a8a8a" stroke="#8a8a8a" stroke-width="1.3"/><circle cx="66.0" cy="148" r="3.2" fill="#f0f0f0"/><circle cx="66.0" cy="148" r="1.6" fill="#8a8a8a"/><rect x="82" y="138.5" width="77" height="19" fill="#959595"/><path d="M87 140H93L94 141V147H101L103 149V155L102 156H87z" fill="#d5d5d5" stroke="#555" stroke-width="1.1"/><path d="M94 147V156M90 140V156M87 150H94" stroke="#777" stroke-width="0.8" fill="none"/><circle cx="172" cy="148" r="7.2" fill="#f4f4f4" stroke="#8a8a8a" stroke-width="1.3"/><circle cx="172" cy="148" r="3" fill="#333"/><rect x="40" y="164.6" width="198.6" height="23" fill="#fff" opacity="0.55"/><rect x="68" y="164.6" width="170.6" height="23" fill="#ededed"/><path d="M48.5 171.1L55 176.1L48.5 181.1z" fill="none" stroke="#333" stroke-width="1.2" stroke-linejoin="round"/><g transform="translate(80 176.1)" fill="#6e6e6e"><circle r="6.2"/><rect x="-1.8" y="-9" width="3.6" height="5" transform="rotate(0)"/><rect x="-1.8" y="-9" width="3.6" height="5" transform="rotate(45)"/><rect x="-1.8" y="-9" width="3.6" height="5" transform="rotate(90)"/><rect x="-1.8" y="-9" width="3.6" height="5" transform="rotate(135)"/><rect x="-1.8" y="-9" width="3.6" height="5" transform="rotate(180)"/><rect x="-1.8" y="-9" width="3.6" height="5" transform="rotate(225)"/><rect x="-1.8" y="-9" width="3.6" height="5" transform="rotate(270)"/><rect x="-1.8" y="-9" width="3.6" height="5" transform="rotate(315)"/><circle r="2.4" fill="#f0f0f0"/></g><rect x="40" y="192.7" width="161.0" height="23" fill="#fff" opacity="0.55"/><rect x="68" y="192.7" width="133.0" height="23" fill="#ededed"/><path d="M48.5 199.2L55 204.2L48.5 209.2z" fill="none" stroke="#333" stroke-width="1.2" stroke-linejoin="round"/><path d="M71 197.2H78L79 199.2H90V211.2H71z" fill="#8e8e8e"/><path d="M71 200.2H90" stroke="#bdbdbd" stroke-width="0.8"/><rect x="40" y="220.8" width="161.0" height="23" fill="#fff" opacity="0.55"/><rect x="68" y="220.8" width="133.0" height="23" fill="#ededed"/><path d="M48.5 227.3L55 232.3L48.5 237.3z" fill="none" stroke="#333" stroke-width="1.2" stroke-linejoin="round"/><rect x="71" y="225.3" width="6" height="15" fill="#3aa0e8"/><rect x="78" y="228.3" width="9" height="10" fill="#fff" stroke="#999" stroke-width="1"/><rect x="79" y="230.3" width="7" height="3" fill="#3aa0e8"/><rect x="40" y="248.9" width="148.0" height="23" fill="#fff" opacity="0.55"/><rect x="68" y="248.9" width="120.0" height="23" fill="#ededed"/><path d="M48.5 255.4L55 260.4L48.5 265.4z" fill="none" stroke="#333" stroke-width="1.2" stroke-linejoin="round"/><path d="M71 260.4C76 253.39999999999998 85 253.39999999999998 90 260.4C85 267.4 76 267.4 71 260.4z" fill="none" stroke="#8a8a8a" stroke-width="1.3"/><circle cx="80.5" cy="260.4" r="3" fill="none" stroke="#8a8a8a" stroke-width="1.2"/><path d="M75 253.39999999999998L86 267.4" stroke="#8a8a8a" stroke-width="1.3"/><path d="M100 253.39999999999998H107L108 255.39999999999998H119V267.4H100z" fill="#8e8e8e"/><path d="M100 256.4H119" stroke="#bdbdbd" stroke-width="0.8"/><rect x="40" y="277.0" width="190.0" height="23" fill="#fff" opacity="0.55"/><rect x="68" y="277.0" width="162.0" height="23" fill="#ededed"/><path d="M48.5 283.5L55 288.5L48.5 293.5z" fill="none" stroke="#333" stroke-width="1.2" stroke-linejoin="round"/><path d="M71 288.5C76 281.5 85 281.5 90 288.5C85 295.5 76 295.5 71 288.5z" fill="#8a8a8a" stroke="#8a8a8a" stroke-width="1.3"/><circle cx="80.5" cy="288.5" r="3.2" fill="#f0f0f0"/><circle cx="80.5" cy="288.5" r="1.6" fill="#8a8a8a"/><path d="M100 281.5H107L108 283.5H119V295.5H100z" fill="#8e8e8e"/><path d="M100 284.5H119" stroke="#bdbdbd" stroke-width="0.8"/><rect x="40" y="305.1" width="154.0" height="23" fill="#fff" opacity="0.55"/><rect x="68" y="305.1" width="126.0" height="23" fill="#ededed"/><path d="M48.5 311.6L55 316.6L48.5 321.6z" fill="none" stroke="#333" stroke-width="1.2" stroke-linejoin="round"/><rect x="68" y="305.1" width="5.7" height="23" fill="#f38ac4"/><path d="M77 316.6C82 309.6 91 309.6 96 316.6C91 323.6 82 323.6 77 316.6z" fill="none" stroke="#8a8a8a" stroke-width="1.3"/><circle cx="86.5" cy="316.6" r="3" fill="none" stroke="#8a8a8a" stroke-width="1.2"/><path d="M81 309.6L92 323.6" stroke="#8a8a8a" stroke-width="1.3"/><path d="M108 312.6L112 308.6H124V320.6L120 324.6H108z" fill="#cdd0d6" stroke="#555" stroke-width="1.1"/><path d="M120 312.6L124 308.6V320.6L120 324.6z" fill="#a9adb5"/><path d="M108 312.6H120V324.6" stroke="#666" stroke-width="0.8" fill="none"/><rect x="40" y="333.2" width="195.5" height="23" fill="#fff" opacity="0.55"/><rect x="68" y="333.2" width="167.5" height="23" fill="#ededed"/><path d="M48.5 339.7L55 344.7L48.5 349.7z" fill="none" stroke="#333" stroke-width="1.2" stroke-linejoin="round"/><rect x="68" y="333.2" width="5.7" height="23" fill="#fda85a"/><path d="M77 344.70000000000005C82 337.70000000000005 91 337.70000000000005 96 344.70000000000005C91 351.70000000000005 82 351.70000000000005 77 344.70000000000005z" fill="none" stroke="#8a8a8a" stroke-width="1.3"/><circle cx="86.5" cy="344.70000000000005" r="3" fill="none" stroke="#8a8a8a" stroke-width="1.2"/><path d="M81 337.70000000000005L92 351.70000000000005" stroke="#8a8a8a" stroke-width="1.3"/><path d="M108 340.70000000000005L112 336.70000000000005H124V348.70000000000005L120 352.70000000000005H108z" fill="#cdd0d6" stroke="#555" stroke-width="1.1"/><path d="M120 340.70000000000005L124 336.70000000000005V348.70000000000005L120 352.70000000000005z" fill="#a9adb5"/><path d="M108 340.70000000000005H120V352.70000000000005" stroke="#666" stroke-width="0.8" fill="none"/><rect x="40" y="361.3" width="154.0" height="23" fill="#fff" opacity="0.55"/><rect x="68" y="361.3" width="126.0" height="23" fill="#ededed"/><path d="M48.5 367.8L55 372.8L48.5 377.8z" fill="none" stroke="#333" stroke-width="1.2" stroke-linejoin="round"/><rect x="68" y="361.3" width="5.7" height="23" fill="#00f2d2"/><path d="M77 372.8C82 365.8 91 365.8 96 372.8C91 379.8 82 379.8 77 372.8z" fill="none" stroke="#8a8a8a" stroke-width="1.3"/><circle cx="86.5" cy="372.8" r="3" fill="none" stroke="#8a8a8a" stroke-width="1.2"/><path d="M81 365.8L92 379.8" stroke="#8a8a8a" stroke-width="1.3"/><path d="M108 368.8L112 364.8H124V376.8L120 380.8H108z" fill="#cdd0d6" stroke="#555" stroke-width="1.1"/><path d="M120 368.8L124 364.8V376.8L120 380.8z" fill="#a9adb5"/><path d="M108 368.8H120V380.8" stroke="#666" stroke-width="0.8" fill="none"/><rect x="40" y="389.4" width="153.7" height="23" fill="#fff" opacity="0.55"/><rect x="68" y="389.4" width="125.7" height="23" fill="#ededed"/><path d="M48.5 395.9L55 400.9L48.5 405.9z" fill="none" stroke="#333" stroke-width="1.2" stroke-linejoin="round"/><rect x="68" y="389.4" width="5.7" height="23" fill="#d9db3a"/><path d="M77 400.9C82 393.9 91 393.9 96 400.9C91 407.9 82 407.9 77 400.9z" fill="none" stroke="#8a8a8a" stroke-width="1.3"/><circle cx="86.5" cy="400.9" r="3" fill="none" stroke="#8a8a8a" stroke-width="1.2"/><path d="M81 393.9L92 407.9" stroke="#8a8a8a" stroke-width="1.3"/><path d="M109 397.9L113 393.9H125V405.9L121 409.9H109z" fill="#e0e0e0" stroke="#555" stroke-width="1.1"/><path d="M121 397.9L125 393.9V405.9L121 409.9z" fill="#c8c8c8"/><path d="M109 397.9H121V409.9" stroke="#666" stroke-width="0.8" fill="none"/><path d="M112 388.9V397.9M109 391.9H115M108 395.9C109 398.9 115 398.9 116 395.9" stroke="#222" stroke-width="1.1" fill="none"/><rect x="40" y="417.5" width="196.0" height="23" fill="#fff" opacity="0.55"/><rect x="68" y="417.5" width="168.0" height="23" fill="#ededed"/><path d="M48.5 424.0L55 429.0L48.5 434.0z" fill="none" stroke="#333" stroke-width="1.2" stroke-linejoin="round"/><rect x="68" y="417.5" width="5.7" height="23" fill="#fd6a3c"/><path d="M77 429.0C82 422.0 91 422.0 96 429.0C91 436.0 82 436.0 77 429.0z" fill="none" stroke="#8a8a8a" stroke-width="1.3"/><circle cx="86.5" cy="429.0" r="3" fill="none" stroke="#8a8a8a" stroke-width="1.2"/><path d="M81 422.0L92 436.0" stroke="#8a8a8a" stroke-width="1.3"/><path d="M108 425.0L112 421.0H124V433.0L120 437.0H108z" fill="#cdd0d6" stroke="#555" stroke-width="1.1"/><path d="M120 425.0L124 421.0V433.0L120 437.0z" fill="#a9adb5"/><path d="M108 425.0H120V437.0" stroke="#666" stroke-width="0.8" fill="none"/><rect x="40" y="445.6" width="247.5" height="23" fill="#fff" opacity="0.55"/><rect x="68" y="445.6" width="219.5" height="23" fill="#ededed"/><path d="M48.5 452.1L55 457.1L48.5 462.1z" fill="none" stroke="#333" stroke-width="1.2" stroke-linejoin="round"/><rect x="68" y="445.6" width="5.7" height="23" fill="#4a9ee8"/><path d="M77 457.1C82 450.1 91 450.1 96 457.1C91 464.1 82 464.1 77 457.1z" fill="none" stroke="#8a8a8a" stroke-width="1.3"/><circle cx="86.5" cy="457.1" r="3" fill="none" stroke="#8a8a8a" stroke-width="1.2"/><path d="M81 450.1L92 464.1" stroke="#8a8a8a" stroke-width="1.3"/><path d="M108 449.1H114L115 450.1V456.1H122L124 458.1V464.1L123 465.1H108z" fill="#cdd0d6" stroke="#555" stroke-width="1.1"/><path d="M115 456.1V465.1M111 449.1V465.1M108 459.1H115" stroke="#777" stroke-width="0.8" fill="none"/><rect x="40" y="473.7" width="266.4" height="23" fill="#fff" opacity="0.55"/><rect x="68" y="473.7" width="238.4" height="23" fill="#ededed"/><path d="M48.5 480.2L55 485.2L48.5 490.2z" fill="none" stroke="#333" stroke-width="1.2" stroke-linejoin="round"/><rect x="68" y="473.7" width="5.7" height="23" fill="#4fd64a"/><path d="M77 485.20000000000005C82 478.20000000000005 91 478.20000000000005 96 485.20000000000005C91 492.20000000000005 82 492.20000000000005 77 485.20000000000005z" fill="none" stroke="#8a8a8a" stroke-width="1.3"/><circle cx="86.5" cy="485.20000000000005" r="3" fill="none" stroke="#8a8a8a" stroke-width="1.2"/><path d="M81 478.20000000000005L92 492.20000000000005" stroke="#8a8a8a" stroke-width="1.3"/><path d="M108 477.20000000000005H114L115 478.20000000000005V484.20000000000005H122L124 486.20000000000005V492.20000000000005L123 493.20000000000005H108z" fill="#cdd0d6" stroke="#555" stroke-width="1.1"/><path d="M115 484.20000000000005V493.20000000000005M111 477.20000000000005V493.20000000000005M108 487.20000000000005H115" stroke="#777" stroke-width="0.8" fill="none"/><rect x="40" y="501.8" width="247.5" height="23" fill="#fff" opacity="0.55"/><rect x="68" y="501.8" width="219.5" height="23" fill="#ededed"/><path d="M48.5 508.3L55 513.3L48.5 518.3z" fill="none" stroke="#333" stroke-width="1.2" stroke-linejoin="round"/><rect x="68" y="501.8" width="5.7" height="23" fill="#fda85a"/><path d="M77 513.3C82 506.29999999999995 91 506.29999999999995 96 513.3C91 520.3 82 520.3 77 513.3z" fill="none" stroke="#8a8a8a" stroke-width="1.3"/><circle cx="86.5" cy="513.3" r="3" fill="none" stroke="#8a8a8a" stroke-width="1.2"/><path d="M81 506.29999999999995L92 520.3" stroke="#8a8a8a" stroke-width="1.3"/><path d="M108 505.29999999999995H114L115 506.29999999999995V512.3H122L124 514.3V520.3L123 521.3H108z" fill="#cdd0d6" stroke="#555" stroke-width="1.1"/><path d="M115 512.3V521.3M111 505.29999999999995V521.3M108 515.3H115" stroke="#777" stroke-width="0.8" fill="none"/><rect x="40" y="529.9" width="214.8" height="23" fill="#fff" opacity="0.55"/><rect x="68" y="529.9" width="186.8" height="23" fill="#ededed"/><path d="M48.5 536.4L55 541.4L48.5 546.4z" fill="none" stroke="#333" stroke-width="1.2" stroke-linejoin="round"/><rect x="68" y="529.9" width="5.7" height="23" fill="#b8f55a"/><path d="M77 541.4000000000001C82 534.4000000000001 91 534.4000000000001 96 541.4000000000001C91 548.4000000000001 82 548.4000000000001 77 541.4000000000001z" fill="none" stroke="#8a8a8a" stroke-width="1.3"/><circle cx="86.5" cy="541.4000000000001" r="3" fill="none" stroke="#8a8a8a" stroke-width="1.2"/><path d="M81 534.4000000000001L92 548.4000000000001" stroke="#8a8a8a" stroke-width="1.3"/><path d="M108 533.4000000000001H114L115 534.4000000000001V540.4000000000001H122L124 542.4000000000001V548.4000000000001L123 549.4000000000001H108z" fill="#cdd0d6" stroke="#555" stroke-width="1.1"/><path d="M115 540.4000000000001V549.4000000000001M111 533.4000000000001V549.4000000000001M108 543.4000000000001H115" stroke="#777" stroke-width="0.8" fill="none"/><rect x="40" y="558.0" width="153.7" height="23" fill="#fff" opacity="0.55"/><rect x="68" y="558.0" width="125.7" height="23" fill="#ededed"/><path d="M48.5 564.5L55 569.5L48.5 574.5z" fill="none" stroke="#333" stroke-width="1.2" stroke-linejoin="round"/><rect x="68" y="558.0" width="5.7" height="23" fill="#f9a8b4"/><path d="M77 569.5C82 562.5 91 562.5 96 569.5C91 576.5 82 576.5 77 569.5z" fill="none" stroke="#8a8a8a" stroke-width="1.3"/><circle cx="86.5" cy="569.5" r="3" fill="none" stroke="#8a8a8a" stroke-width="1.2"/><path d="M81 562.5L92 576.5" stroke="#8a8a8a" stroke-width="1.3"/><path d="M108 565.5L112 561.5H124V573.5L120 577.5H108z" fill="#cdd0d6" stroke="#555" stroke-width="1.1"/><path d="M120 565.5L124 561.5V573.5L120 577.5z" fill="#a9adb5"/><path d="M108 565.5H120V577.5" stroke="#666" stroke-width="0.8" fill="none"/><rect x="40" y="586.1" width="228.7" height="23" fill="#fff" opacity="0.55"/><rect x="68" y="586.1" width="200.7" height="23" fill="#ededed"/><path d="M48.5 592.6L55 597.6L48.5 602.6z" fill="none" stroke="#333" stroke-width="1.2" stroke-linejoin="round"/><rect x="68" y="586.1" width="5.7" height="23" fill="#f23fa6"/><path d="M77 597.6C82 590.6 91 590.6 96 597.6C91 604.6 82 604.6 77 597.6z" fill="#8a8a8a" stroke="#8a8a8a" stroke-width="1.3"/><circle cx="86.5" cy="597.6" r="3.2" fill="#f0f0f0"/><circle cx="86.5" cy="597.6" r="1.6" fill="#8a8a8a"/><path d="M108 593.6L112 589.6H124V601.6L120 605.6H108z" fill="#cdd0d6" stroke="#555" stroke-width="1.1"/><path d="M120 593.6L124 589.6V601.6L120 605.6z" fill="#a9adb5"/><path d="M108 593.6H120V605.6" stroke="#666" stroke-width="0.8" fill="none"/><rect x="40" y="614.2" width="219.0" height="23" fill="#fff" opacity="0.55"/><rect x="68" y="614.2" width="191.0" height="23" fill="#ededed"/><path d="M48.5 620.7L55 625.7L48.5 630.7z" fill="none" stroke="#333" stroke-width="1.2" stroke-linejoin="round"/><rect x="68" y="614.2" width="5.7" height="23" fill="#f78ad2"/><path d="M77 625.7C82 618.7 91 618.7 96 625.7C91 632.7 82 632.7 77 625.7z" fill="#8a8a8a" stroke="#8a8a8a" stroke-width="1.3"/><circle cx="86.5" cy="625.7" r="3.2" fill="#f0f0f0"/><circle cx="86.5" cy="625.7" r="1.6" fill="#8a8a8a"/><path d="M108 621.7L112 617.7H124V629.7L120 633.7H108z" fill="#cdd0d6" stroke="#555" stroke-width="1.1"/><path d="M120 621.7L124 617.7V629.7L120 633.7z" fill="#a9adb5"/><path d="M108 621.7H120V633.7" stroke="#666" stroke-width="0.8" fill="none"/></svg>
<div class="rt" style="left:120px;top:140.5px;color:#fff;font-weight:bold;-webkit-text-stroke:0.2px #fff">kiro</div><div class="rt" style="left:107px;top:169.1px">Document Settings</div><div class="rt" style="left:107px;top:197.2px">Named Views</div><div class="rt" style="left:107px;top:225.3px">Contact: sets</div><div class="rt" style="left:136px;top:253.4px">Origin</div><div class="rt" style="left:136px;top:281.5px">Relationships</div><div class="rt" style="left:141.6px;top:309.6px">head:1</div><div class="rt" style="left:141.6px;top:337.7px">head_cover:1</div><div class="rt" style="left:141.6px;top:365.8px">neck:1</div><div class="rt" style="left:141.6px;top:393.9px">plate:1</div><div class="rt" style="left:141.6px;top:422.0px">plate_cover:1</div><div class="rt" style="left:141.6px;top:450.1px">core_arms_housing:1</div><div class="rt" style="left:141.6px;top:478.2px">vcradle_arms_housing:1</div><div class="rt" style="left:141.6px;top:506.3px">vpressarm_housing:1</div><div class="rt" style="left:141.6px;top:534.4px">vpressarm_rail:1</div><div class="rt" style="left:141.6px;top:562.5px">book:1</div><div class="rt" style="left:141.6px;top:590.6px">Pinion (16 teeth):1</div><div class="rt" style="left:141.6px;top:618.7px">Rack (19 teeth):1</div>
<div id="tt"><div class="t1">Rack and Pinion</div><div class="t2">Generate a parametric rack and mating pinion gear set.</div><svg width="389" height="337" viewBox="0 0 389 337" style="left:0;top:0"><g transform="translate(-453 -98)"><defs><clipPath id="ttclip"><rect x="488" y="177" width="325.5" height="235"/></clipPath><linearGradient id="brush" x1="0" y1="0" x2="1" y2="0.3"><stop offset="0" stop-color="#5f5d59"/><stop offset="0.5" stop-color="#6d6a65"/><stop offset="1" stop-color="#615e5a"/></linearGradient><radialGradient id="gface" cx="0.45" cy="0.4" r="0.6"><stop offset="0" stop-color="#7a7874"/><stop offset="1" stop-color="#5a5855"/></radialGradient><linearGradient id="hubg" x1="0" y1="0" x2="1" y2="1"><stop offset="0" stop-color="#3a3937"/><stop offset="0.35" stop-color="#7e7c78"/><stop offset="0.6" stop-color="#4a4846"/><stop offset="1" stop-color="#2e2d2c"/></linearGradient></defs><g clip-path="url(#ttclip)"><polygon points="503.5,479.4 859.5,215.4 796.7,190.4 464.5,419.5" fill="#5d5c59"/>
<polygon points="841.5,228.8 844.1,214.9 781.2,189.3 779.5,202.2" fill="#222221"/>
<polygon points="844.1,214.9 847.7,212.4 784.6,187.0 781.2,189.3" fill="#72716d"/>
<path d="M844.1 214.9L781.2 189.3" stroke="#8d8b87" stroke-width="0.8"/>
<polygon points="828.3,238.6 830.8,224.7 768.5,198.0 767.0,210.9" fill="#222221"/>
<polygon points="830.8,224.7 834.4,222.1 771.9,195.6 768.5,198.0" fill="#72716d"/>
<path d="M830.8 224.7L768.5 198.0" stroke="#8d8b87" stroke-width="0.8"/>
<polygon points="814.8,248.6 817.1,234.7 755.6,206.8 754.2,219.7" fill="#222221"/>
<polygon points="817.1,234.7 820.8,232.0 759.1,204.4 755.6,206.8" fill="#72716d"/>
<path d="M817.1 234.7L755.6 206.8" stroke="#8d8b87" stroke-width="0.8"/>
<polygon points="801.0,258.8 803.2,244.9 742.4,215.8 741.1,228.7" fill="#222221"/>
<polygon points="803.2,244.9 807.0,242.2 745.9,213.4 742.4,215.8" fill="#72716d"/>
<path d="M803.2 244.9L742.4 215.8" stroke="#8d8b87" stroke-width="0.8"/>
<polygon points="787.0,269.2 789.0,255.3 728.9,225.0 727.8,237.9" fill="#222221"/>
<polygon points="789.0,255.3 792.9,252.5 732.6,222.5 728.9,225.0" fill="#72716d"/>
<path d="M789.0 255.3L728.9 225.0" stroke="#8d8b87" stroke-width="0.8"/>
<polygon points="772.7,279.8 774.5,265.9 715.2,234.3 714.3,247.2" fill="#222221"/>
<polygon points="774.5,265.9 778.5,263.1 718.9,231.8 715.2,234.3" fill="#72716d"/>
<path d="M774.5 265.9L715.2 234.3" stroke="#8d8b87" stroke-width="0.8"/>
<polygon points="758.1,290.6 759.7,276.8 701.3,243.8 700.5,256.7" fill="#222221"/>
<polygon points="759.7,276.8 763.7,273.8 705.0,241.2 701.3,243.8" fill="#72716d"/>
<path d="M759.7 276.8L701.3 243.8" stroke="#8d8b87" stroke-width="0.8"/>
<polygon points="743.1,301.7 744.6,287.9 687.0,253.5 686.4,266.4" fill="#222221"/>
<polygon points="744.6,287.9 748.7,284.9 690.9,250.9 687.0,253.5" fill="#72716d"/>
<path d="M744.6 287.9L687.0 253.5" stroke="#8d8b87" stroke-width="0.8"/>
<polygon points="727.9,313.0 729.2,299.2 672.5,263.4 672.1,276.3" fill="#222221"/>
<polygon points="729.2,299.2 733.3,296.1 676.5,260.7 672.5,263.4" fill="#72716d"/>
<path d="M729.2 299.2L672.5 263.4" stroke="#8d8b87" stroke-width="0.8"/>
<polygon points="712.3,324.5 713.4,310.7 657.8,273.4 657.5,286.4" fill="#222221"/>
<polygon points="713.4,310.7 717.7,307.6 661.8,270.7 657.8,273.4" fill="#72716d"/>
<path d="M713.4 310.7L657.8 273.4" stroke="#8d8b87" stroke-width="0.8"/>
<polygon points="696.4,336.4 697.3,322.6 642.7,283.7 642.6,296.7" fill="#222221"/>
<polygon points="697.3,322.6 701.6,319.4 646.7,280.9 642.7,283.7" fill="#72716d"/>
<path d="M697.3 322.6L642.7 283.7" stroke="#8d8b87" stroke-width="0.8"/>
<polygon points="680.2,348.4 680.8,334.6 627.3,294.2 627.4,307.1" fill="#222221"/>
<polygon points="680.8,334.6 685.2,331.4 631.4,291.4 627.3,294.2" fill="#72716d"/>
<path d="M680.8 334.6L627.3 294.2" stroke="#8d8b87" stroke-width="0.8"/>
<polygon points="663.5,360.7 663.9,347.0 611.6,304.9 611.9,317.8" fill="#222221"/>
<polygon points="663.9,347.0 668.5,343.7 615.8,302.0 611.6,304.9" fill="#72716d"/>
<path d="M663.9 347.0L611.6 304.9" stroke="#8d8b87" stroke-width="0.8"/>
<polygon points="646.5,373.4 646.7,359.6 595.6,315.8 596.1,328.7" fill="#222221"/>
<polygon points="646.7,359.6 651.3,356.2 599.9,312.9 595.6,315.8" fill="#72716d"/>
<path d="M646.7 359.6L595.6 315.8" stroke="#8d8b87" stroke-width="0.8"/>
<polygon points="629.1,386.2 629.0,372.6 579.2,326.9 580.0,339.8" fill="#222221"/>
<polygon points="629.0,372.6 633.8,369.1 583.6,323.9 579.2,326.9" fill="#72716d"/>
<path d="M629.0 372.6L579.2 326.9" stroke="#8d8b87" stroke-width="0.8"/>
<polygon points="611.4,399.4 610.9,385.8 562.5,338.3 563.5,351.2" fill="#222221"/>
<polygon points="610.9,385.8 615.8,382.2 567.0,335.2 562.5,338.3" fill="#72716d"/>
<path d="M610.9 385.8L562.5 338.3" stroke="#8d8b87" stroke-width="0.8"/>
<polygon points="593.1,412.9 592.4,399.3 545.4,349.9 546.7,362.8" fill="#222221"/>
<polygon points="592.4,399.3 597.5,395.7 550.1,346.8 545.4,349.9" fill="#72716d"/>
<path d="M592.4 399.3L545.4 349.9" stroke="#8d8b87" stroke-width="0.8"/>
<polygon points="574.5,426.8 573.5,413.2 528.0,361.8 529.6,374.6" fill="#222221"/>
<polygon points="573.5,413.2 578.6,409.5 532.7,358.6 528.0,361.8" fill="#72716d"/>
<path d="M573.5 413.2L528.0 361.8" stroke="#8d8b87" stroke-width="0.8"/>
<polygon points="555.4,440.9 554.1,427.4 510.2,373.9 512.0,386.7" fill="#222221"/>
<polygon points="554.1,427.4 559.4,423.6 515.0,370.6 510.2,373.9" fill="#72716d"/>
<path d="M554.1 427.4L510.2 373.9" stroke="#8d8b87" stroke-width="0.8"/>
<polygon points="535.9,455.4 534.3,442.0 492.0,386.3 494.1,399.1" fill="#222221"/>
<polygon points="534.3,442.0 539.6,438.1 497.0,383.0 492.0,386.3" fill="#72716d"/>
<path d="M534.3 442.0L492.0 386.3" stroke="#8d8b87" stroke-width="0.8"/>
<polygon points="515.9,470.2 513.9,456.9 473.5,399.0 475.8,411.7" fill="#222221"/>
<polygon points="513.9,456.9 519.4,452.9 478.5,395.5 473.5,399.0" fill="#72716d"/>
<path d="M513.9 456.9L473.5 399.0" stroke="#8d8b87" stroke-width="0.8"/>
<polygon points="530.5,488.7 515.9,470.2 513.9,456.9 519.4,452.9 531.7,458.5 535.9,455.4 534.3,442.0 539.6,438.1 551.4,443.9 555.4,440.9 554.1,427.4 559.4,423.6 570.5,429.7 574.5,426.8 573.5,413.2 578.6,409.5 589.3,415.8 593.1,412.9 592.4,399.3 597.5,395.7 607.6,402.3 611.4,399.4 610.9,385.8 615.8,382.2 625.4,389.0 629.1,386.2 629.0,372.6 633.8,369.1 642.9,376.0 646.5,373.4 646.7,359.6 651.3,356.2 660.0,363.4 663.5,360.7 663.9,347.0 668.5,343.7 676.7,351.0 680.2,348.4 680.8,334.6 685.2,331.4 693.0,338.9 696.4,336.4 697.3,322.6 701.6,319.4 709.0,327.0 712.3,324.5 713.4,310.7 717.7,307.6 724.7,315.4 727.9,313.0 729.2,299.2 733.3,296.1 740.0,304.1 743.1,301.7 744.6,287.9 748.7,284.9 755.0,292.9 758.1,290.6 759.7,276.8 763.7,273.8 769.6,282.0 772.7,279.8 774.5,265.9 778.5,263.1 784.0,271.4 787.0,269.2 789.0,255.3 792.9,252.5 798.1,260.9 801.0,258.8 803.2,244.9 807.0,242.2 811.9,250.7 814.8,248.6 817.1,234.7 820.8,232.0 825.4,240.7 828.3,238.6 830.8,224.7 834.4,222.1 838.7,230.8 841.5,228.8 844.1,214.9 847.7,212.4 851.7,221.2 853.0,243.8" fill="url(#brush)"/>
<polygon points="682.1,351.2 683.4,352.1 632.2,311.9 630.9,311.0" fill="#1a1916" stroke="#1a1916" stroke-width="0.5"/>
<polygon points="694.2,334.9 695.2,335.9 642.9,297.2 641.8,296.2" fill="#1c1b18" stroke="#1c1b18" stroke-width="0.5"/>
<polygon points="714.2,310.2 713.0,309.5 658.8,273.2 660.0,274.0" fill="#1c1b18" stroke="#1c1b18" stroke-width="0.5"/>
<polygon points="726.3,294.1 725.1,293.1 669.7,258.4 671.0,259.4" fill="#1a1916" stroke="#1a1916" stroke-width="0.5"/>
<polygon points="680.9,350.1 682.1,351.2 630.9,311.0 629.7,309.9" fill="#1c1b18" stroke="#1c1b18" stroke-width="0.5"/>
<polygon points="725.1,293.1 723.8,292.2 668.4,257.6 669.7,258.4" fill="#1c1b18" stroke="#1c1b18" stroke-width="0.5"/>
<polygon points="692.5,332.0 694.2,334.9 641.8,296.2 640.1,293.4" fill="#21201d" stroke="#21201d" stroke-width="0.5"/>
<polygon points="713.0,309.5 709.9,308.5 655.7,272.2 658.8,273.2" fill="#21201d" stroke="#21201d" stroke-width="0.5"/>
<polygon points="680.0,348.9 680.9,350.1 629.7,309.9 628.7,308.7" fill="#1f1e1b" stroke="#1f1e1b" stroke-width="0.5"/>
<polygon points="723.8,292.2 722.4,291.6 667.0,256.9 668.4,257.6" fill="#1f1e1b" stroke="#1f1e1b" stroke-width="0.5"/>
<polygon points="679.2,347.6 680.0,348.9 628.7,308.7 627.9,307.4" fill="#22211e" stroke="#22211e" stroke-width="0.5"/>
<polygon points="722.4,291.6 721.0,291.1 665.6,256.4 667.0,256.9" fill="#22211e" stroke="#22211e" stroke-width="0.5"/>
<polygon points="678.7,346.1 679.2,347.6 627.9,307.4 627.3,306.0" fill="#262522" stroke="#262522" stroke-width="0.5"/>
<polygon points="721.0,291.1 719.5,291.0 664.1,256.2 665.6,256.4" fill="#262522" stroke="#262522" stroke-width="0.5"/>
<polygon points="678.2,342.3 678.7,346.1 627.3,306.0 626.7,302.4" fill="#2b2a27" stroke="#2b2a27" stroke-width="0.5"/>
<polygon points="719.5,291.0 715.8,291.6 660.5,256.5 664.1,256.2" fill="#2b2a27" stroke="#2b2a27" stroke-width="0.5"/>
<polygon points="663.2,359.0 664.0,360.6 613.8,318.9 613.0,317.3" fill="#242320" stroke="#242320" stroke-width="0.5"/>
<polygon points="729.2,272.5 727.5,272.2 670.9,238.9 672.6,239.3" fill="#242320" stroke="#242320" stroke-width="0.5"/>
<polygon points="662.6,357.4 663.2,359.0 613.0,317.3 612.3,315.7" fill="#262522" stroke="#262522" stroke-width="0.5"/>
<polygon points="727.5,272.2 725.8,272.0 669.3,238.7 670.9,238.9" fill="#262522" stroke="#262522" stroke-width="0.5"/>
<polygon points="662.2,355.6 662.6,357.4 612.3,315.7 611.8,314.1" fill="#292825" stroke="#292825" stroke-width="0.5"/>
<polygon points="725.8,272.0 724.1,272.0 667.6,238.6 669.3,238.7" fill="#282724" stroke="#282724" stroke-width="0.5"/>
<polygon points="662.0,353.9 662.2,355.6 611.8,314.1 611.5,312.4" fill="#2b2a27" stroke="#2b2a27" stroke-width="0.5"/>
<polygon points="724.1,272.0 722.4,272.3 665.9,238.8 667.6,238.6" fill="#2b2a27" stroke="#2b2a27" stroke-width="0.5"/>
<polygon points="662.0,352.1 662.0,353.9 611.5,312.4 611.5,310.7" fill="#2f2e2b" stroke="#2f2e2b" stroke-width="0.5"/>
<polygon points="722.4,272.3 720.7,272.8 664.3,239.2 665.9,238.8" fill="#2f2e2b" stroke="#2f2e2b" stroke-width="0.5"/>
<polygon points="662.9,347.7 662.0,352.1 611.5,310.7 612.1,306.6" fill="#32312e" stroke="#32312e" stroke-width="0.5"/>
<polygon points="720.7,272.8 716.9,274.8 660.7,240.9 664.3,239.2" fill="#32312e" stroke="#32312e" stroke-width="0.5"/>
<polygon points="644.6,360.0 644.7,362.1 595.2,319.2 595.0,317.3" fill="#2d2c29" stroke="#2d2c29" stroke-width="0.5"/>
<polygon points="725.6,252.9 723.6,253.3 666.1,221.1 667.9,220.8" fill="#2d2c29" stroke="#2d2c29" stroke-width="0.5"/>
<polygon points="644.7,358.0 644.6,360.0 595.0,317.3 595.0,315.3" fill="#2f2e2b" stroke="#2f2e2b" stroke-width="0.5"/>
<polygon points="723.6,253.3 721.7,253.9 664.2,221.6 666.1,221.1" fill="#2f2e2b" stroke="#2f2e2b" stroke-width="0.5"/>
<polygon points="644.9,355.9 644.7,358.0 595.0,315.3 595.1,313.4" fill="#302f2c" stroke="#302f2c" stroke-width="0.5"/>
<polygon points="721.7,253.9 719.8,254.6 662.5,222.2 664.2,221.6" fill="#302f2c" stroke="#302f2c" stroke-width="0.5"/>
<polygon points="645.3,353.9 644.9,355.9 595.1,313.4 595.4,311.5" fill="#32312e" stroke="#32312e" stroke-width="0.5"/>
<polygon points="719.8,254.6 718.0,255.6 660.7,223.0 662.5,222.2" fill="#32312e" stroke="#32312e" stroke-width="0.5"/>
<polygon points="646.0,351.9 645.3,353.9 595.4,311.5 595.9,309.6" fill="#353431" stroke="#353431" stroke-width="0.5"/>
<polygon points="718.0,255.6 716.3,256.8 659.2,224.1 660.7,223.0" fill="#343330" stroke="#343330" stroke-width="0.5"/>
<polygon points="648.2,347.4 646.0,351.9 595.9,309.6 597.8,305.6" fill="#363532" stroke="#363532" stroke-width="0.5"/>
<polygon points="716.3,256.8 712.8,260.2 655.9,227.1 659.2,224.1" fill="#363532" stroke="#363532" stroke-width="0.5"/>
<polygon points="717.9,240.0 715.4,237.5 657.2,206.1 659.7,208.6" fill="#5b5a57" stroke="#5b5a57" stroke-width="0.5"/>
<path d="M717.9 240.0L659.7 208.6" stroke="#9a9893" stroke-width="0.7" opacity="0.8"/>
<polygon points="628.4,353.6 627.7,355.9 578.6,312.5 579.1,310.3" fill="#343330" stroke="#343330" stroke-width="0.5"/>
<polygon points="629.1,351.3 628.4,353.6 579.1,310.3 579.7,308.2" fill="#353431" stroke="#353431" stroke-width="0.5"/>
<polygon points="715.4,237.5 713.4,238.7 655.3,207.2 657.2,206.1" fill="#343330" stroke="#343330" stroke-width="0.5"/>
<polygon points="630.0,349.1 629.1,351.3 579.7,308.2 580.5,306.2" fill="#363532" stroke="#363532" stroke-width="0.5"/>
<polygon points="713.4,238.7 711.4,240.1 653.5,208.3 655.3,207.2" fill="#353431" stroke="#353431" stroke-width="0.5"/>
<polygon points="631.1,347.0 630.0,349.1 580.5,306.2 581.4,304.3" fill="#363532" stroke="#363532" stroke-width="0.5"/>
<polygon points="635.8,341.1 632.4,345.1 582.5,302.6 585.6,299.0" fill="#373633" stroke="#373633" stroke-width="0.5"/>
<polygon points="632.4,345.1 631.1,347.0 581.4,304.3 582.5,302.6" fill="#373633" stroke="#373633" stroke-width="0.5"/>
<polygon points="711.4,240.1 709.6,241.6 651.8,209.6 653.5,208.3" fill="#363532" stroke="#363532" stroke-width="0.5"/>
<polygon points="709.6,241.6 708.0,243.2 650.3,211.1 651.8,209.6" fill="#363532" stroke="#363532" stroke-width="0.5"/>
<polygon points="706.5,244.9 703.7,249.4 646.4,216.7 648.9,212.6" fill="#373633" stroke="#373633" stroke-width="0.5"/>
<polygon points="708.0,243.2 706.5,244.9 648.9,212.6 650.3,211.1" fill="#373633" stroke="#373633" stroke-width="0.5"/>
<polygon points="631.7,336.8 635.8,341.1 585.6,299.0 581.5,294.8" fill="#61605d" stroke="#61605d" stroke-width="0.5"/>
<path d="M631.7 336.8L581.5 294.8" stroke="#9a9893" stroke-width="0.7" opacity="0.8"/>
<polygon points="703.7,249.4 698.6,246.5 641.3,213.7 646.4,216.7" fill="#61605d" stroke="#61605d" stroke-width="0.5"/>
<path d="M703.7 249.4L646.4 216.7" stroke="#9a9893" stroke-width="0.7" opacity="0.8"/>
<polygon points="615.3,342.1 617.3,345.4 568.1,302.0 566.0,298.8" fill="#676663" stroke="#676663" stroke-width="0.5"/>
<path d="M615.3 342.1L566.0 298.8" stroke="#9a9893" stroke-width="0.7" opacity="0.8"/>
<polygon points="627.4,329.1 623.1,332.1 573.0,289.9 577.0,287.4" fill="#343330" stroke="#343330" stroke-width="0.5"/>
<polygon points="702.8,229.8 699.2,228.6 641.0,197.3 644.5,198.4" fill="#676663" stroke="#676663" stroke-width="0.5"/>
<path d="M702.8 229.8L644.5 198.4" stroke="#9a9893" stroke-width="0.7" opacity="0.8"/>
<polygon points="691.9,239.0 690.3,244.1 633.2,211.2 634.5,206.6" fill="#343330" stroke="#343330" stroke-width="0.5"/>
<polygon points="623.1,332.1 621.3,333.7 571.4,291.3 573.0,289.9" fill="#363532" stroke="#363532" stroke-width="0.5"/>
<polygon points="616.7,339.8 615.3,342.1 566.0,298.8 567.2,296.7" fill="#373633" stroke="#373633" stroke-width="0.5"/>
<polygon points="621.3,333.7 619.7,335.5 569.9,292.9 571.4,291.3" fill="#373633" stroke="#373633" stroke-width="0.5"/>
<polygon points="618.1,337.6 616.7,339.8 567.2,296.7 568.5,294.8" fill="#373633" stroke="#373633" stroke-width="0.5"/>
<polygon points="619.7,335.5 618.1,337.6 568.5,294.8 569.9,292.9" fill="#373633" stroke="#373633" stroke-width="0.5"/>
<polygon points="692.9,236.9 691.9,239.0 634.5,206.6 635.4,204.6" fill="#363532" stroke="#363532" stroke-width="0.5"/>
<polygon points="625.4,322.7 627.4,329.1 577.0,287.4 574.8,281.3" fill="#6c6b68" stroke="#6c6b68" stroke-width="0.5"/>
<path d="M625.4 322.7L574.8 281.3" stroke="#9a9893" stroke-width="0.7" opacity="0.8"/>
<polygon points="699.2,228.6 697.4,230.6 639.4,199.0 641.0,197.3" fill="#373633" stroke="#373633" stroke-width="0.5"/>
<polygon points="694.2,234.7 692.9,236.9 635.4,204.6 636.5,202.7" fill="#373633" stroke="#373633" stroke-width="0.5"/>
<polygon points="697.4,230.6 695.7,232.7 637.9,200.8 639.4,199.0" fill="#373633" stroke="#373633" stroke-width="0.5"/>
<polygon points="695.7,232.7 694.2,234.7 636.5,202.7 637.9,200.8" fill="#373633" stroke="#373633" stroke-width="0.5"/>
<polygon points="690.3,244.1 683.8,243.8 626.9,210.7 633.2,211.2" fill="#6c6b68" stroke="#6c6b68" stroke-width="0.5"/>
<path d="M690.3 244.1L633.2 211.2" stroke="#9a9893" stroke-width="0.7" opacity="0.8"/>
<polygon points="624.3,312.6 619.7,314.0 568.9,272.9 573.3,271.8" fill="#2e2d2a" stroke="#2e2d2a" stroke-width="0.5"/>
<polygon points="674.1,240.4 674.0,245.4 617.6,211.8 617.5,207.1" fill="#2e2d2a" stroke="#2e2d2a" stroke-width="0.5"/>
<polygon points="624.9,304.9 624.3,312.6 573.3,271.8 573.5,264.7" fill="#757471" stroke="#757471" stroke-width="0.5"/>
<path d="M624.9 304.9L573.5 264.7" stroke="#9a9893" stroke-width="0.7" opacity="0.8"/>
<polygon points="674.0,245.4 667.0,248.0 611.0,213.9 617.6,211.8" fill="#757471" stroke="#757471" stroke-width="0.5"/>
<path d="M674.0 245.4L617.6 211.8" stroke="#9a9893" stroke-width="0.7" opacity="0.8"/>
<polygon points="619.7,314.0 617.6,315.1 567.0,273.8 568.9,272.9" fill="#32312e" stroke="#32312e" stroke-width="0.5"/>
<polygon points="674.5,238.0 674.1,240.4 617.5,207.1 617.8,205.0" fill="#32312e" stroke="#32312e" stroke-width="0.5"/>
<polygon points="617.6,315.1 615.5,316.4 565.1,274.9 567.0,273.8" fill="#343330" stroke="#343330" stroke-width="0.5"/>
<polygon points="609.5,321.8 610.0,326.1 560.3,283.7 559.6,279.6" fill="#71706d" stroke="#71706d" stroke-width="0.5"/>
<path d="M609.5 321.8L559.6 279.6" stroke="#9a9893" stroke-width="0.7" opacity="0.8"/>
<polygon points="675.3,235.6 674.5,238.0 617.8,205.0 618.3,202.8" fill="#343330" stroke="#343330" stroke-width="0.5"/>
<polygon points="615.5,316.4 613.5,318.0 563.2,276.3 565.1,274.9" fill="#353431" stroke="#353431" stroke-width="0.5"/>
<polygon points="682.9,227.5 678.7,228.2 621.2,196.1 625.3,195.6" fill="#71706d" stroke="#71706d" stroke-width="0.5"/>
<path d="M682.9 227.5L625.3 195.6" stroke="#9a9893" stroke-width="0.7" opacity="0.8"/>
<polygon points="613.5,318.0 611.5,319.8 561.4,277.8 563.2,276.3" fill="#363532" stroke="#363532" stroke-width="0.5"/>
<polygon points="676.2,233.2 675.3,235.6 618.3,202.8 619.1,200.6" fill="#353431" stroke="#353431" stroke-width="0.5"/>
<polygon points="611.5,319.8 609.5,321.8 559.6,279.6 561.4,277.8" fill="#373633" stroke="#373633" stroke-width="0.5"/>
<polygon points="677.4,230.7 676.2,233.2 619.1,200.6 620.1,198.3" fill="#363532" stroke="#363532" stroke-width="0.5"/>
<polygon points="678.7,228.2 677.4,230.7 620.1,198.3 621.2,196.1" fill="#373633" stroke="#373633" stroke-width="0.5"/>
<polygon points="630.6,285.6 627.5,293.6 575.4,254.3 578.0,247.0" fill="#7b7a77" stroke="#7b7a77" stroke-width="0.5"/>
<path d="M630.6 285.6L578.0 247.0" stroke="#9a9893" stroke-width="0.7" opacity="0.8"/>
<polygon points="657.1,253.5 650.4,258.7 595.7,223.1 601.8,218.6" fill="#7b7a77" stroke="#7b7a77" stroke-width="0.5"/>
<path d="M657.1 253.5L601.8 218.6" stroke="#9a9893" stroke-width="0.7" opacity="0.8"/>
<polygon points="627.5,293.6 623.0,293.2 571.2,253.7 575.4,254.3" fill="#252421" stroke="#252421" stroke-width="0.5"/>
<polygon points="655.5,249.2 657.1,253.5 601.8,218.6 600.1,214.5" fill="#252421" stroke="#252421" stroke-width="0.5"/>
<polygon points="641.9,267.6 636.6,274.7 583.2,237.3 587.9,230.9" fill="#7d7c79" stroke="#7d7c79" stroke-width="0.5"/>
<path d="M641.9 267.6L587.9 230.9" stroke="#9a9893" stroke-width="0.7" opacity="0.8"/>
<polygon points="623.0,293.2 620.9,293.4 569.2,253.8 571.2,253.7" fill="#2a2926" stroke="#2a2926" stroke-width="0.5"/>
<polygon points="655.2,247.0 655.5,249.2 600.1,214.5 599.7,212.5" fill="#2a2926" stroke="#2a2926" stroke-width="0.5"/>
<polygon points="620.9,293.4 618.7,294.0 567.1,254.3 569.2,253.8" fill="#2e2d2a" stroke="#2e2d2a" stroke-width="0.5"/>
<polygon points="636.6,274.7 633.0,272.4 579.7,235.0 583.2,237.3" fill="#1b1a17" stroke="#1b1a17" stroke-width="0.5"/>
<polygon points="638.8,264.6 641.9,267.6 587.9,230.9 584.9,228.0" fill="#1b1a17" stroke="#1b1a17" stroke-width="0.5"/>
<polygon points="655.2,244.7 655.2,247.0 599.7,212.5 599.6,210.3" fill="#2e2d2a" stroke="#2e2d2a" stroke-width="0.5"/>
<polygon points="618.7,294.0 616.4,294.8 565.0,255.0 567.1,254.3" fill="#302f2c" stroke="#302f2c" stroke-width="0.5"/>
<polygon points="655.4,242.2 655.2,244.7 599.6,210.3 599.6,208.0" fill="#302f2c" stroke="#302f2c" stroke-width="0.5"/>
<polygon points="616.4,294.8 614.1,295.9 562.8,255.9 565.0,255.0" fill="#31302d" stroke="#31302d" stroke-width="0.5"/>
<polygon points="655.8,239.5 655.4,242.2 599.6,208.0 599.9,205.6" fill="#31302d" stroke="#31302d" stroke-width="0.5"/>
<polygon points="633.0,272.4 631.2,271.8 577.9,234.3 579.7,235.0" fill="#21201d" stroke="#21201d" stroke-width="0.5"/>
<polygon points="623.3,282.1 624.8,283.4 572.4,244.8 570.9,243.5" fill="#1b1a17" stroke="#1b1a17" stroke-width="0.5"/>
<polygon points="637.7,262.9 638.8,264.6 584.9,228.0 583.8,226.4" fill="#21201d" stroke="#21201d" stroke-width="0.5"/>
<polygon points="611.7,297.2 610.6,302.2 559.8,261.5 560.6,257.0" fill="#797875" stroke="#797875" stroke-width="0.5"/>
<path d="M611.7 297.2L560.6 257.0" stroke="#9a9893" stroke-width="0.7" opacity="0.8"/>
<polygon points="646.9,253.5 645.3,252.3 590.5,217.0 592.1,218.1" fill="#1b1a17" stroke="#1b1a17" stroke-width="0.5"/>
<polygon points="614.1,295.9 611.7,297.2 560.6,257.0 562.8,255.9" fill="#33322f" stroke="#33322f" stroke-width="0.5"/>
<polygon points="660.7,234.4 656.4,236.8 600.3,203.1 604.3,201.1" fill="#797875" stroke="#797875" stroke-width="0.5"/>
<path d="M660.7 234.4L604.3 201.1" stroke="#9a9893" stroke-width="0.7" opacity="0.8"/>
<polygon points="656.4,236.8 655.8,239.5 599.9,205.6 600.3,203.1" fill="#33322f" stroke="#33322f" stroke-width="0.5"/>
<polygon points="631.2,271.8 629.1,271.5 576.0,234.0 577.9,234.3" fill="#252421" stroke="#252421" stroke-width="0.5"/>
<polygon points="636.9,260.9 637.7,262.9 583.8,226.4 582.9,224.6" fill="#252421" stroke="#252421" stroke-width="0.5"/>
<polygon points="621.9,280.6 623.3,282.1 570.9,243.5 569.5,242.0" fill="#1e1d1a" stroke="#1e1d1a" stroke-width="0.5"/>
<polygon points="645.3,252.3 643.5,251.3 588.7,216.0 590.5,217.0" fill="#1e1d1a" stroke="#1e1d1a" stroke-width="0.5"/>
<polygon points="629.1,271.5 626.9,271.4 573.9,233.8 576.0,234.0" fill="#282724" stroke="#282724" stroke-width="0.5"/>
<polygon points="636.3,258.8 636.9,260.9 582.9,224.6 582.2,222.5" fill="#282724" stroke="#282724" stroke-width="0.5"/>
<polygon points="620.6,278.8 621.9,280.6 569.5,242.0 568.2,240.3" fill="#201f1c" stroke="#201f1c" stroke-width="0.5"/>
<polygon points="643.5,251.3 641.5,250.5 586.8,215.2 588.7,216.0" fill="#201f1c" stroke="#201f1c" stroke-width="0.5"/>
<polygon points="626.9,271.4 624.6,271.6 571.6,233.9 573.9,233.8" fill="#2a2926" stroke="#2a2926" stroke-width="0.5"/>
<polygon points="635.8,256.4 636.3,258.8 582.2,222.5 581.7,220.3" fill="#2a2926" stroke="#2a2926" stroke-width="0.5"/>
<polygon points="619.5,276.8 620.6,278.8 568.2,240.3 567.0,238.4" fill="#22211e" stroke="#22211e" stroke-width="0.5"/>
<polygon points="641.5,250.5 639.3,249.9 584.7,214.5 586.8,215.2" fill="#22211e" stroke="#22211e" stroke-width="0.5"/>
<polygon points="624.6,271.6 622.1,272.0 569.3,234.1 571.6,233.9" fill="#2c2b28" stroke="#2c2b28" stroke-width="0.5"/>
<polygon points="635.5,253.8 635.8,256.4 581.7,220.3 581.3,217.9" fill="#2c2b28" stroke="#2c2b28" stroke-width="0.5"/>
<polygon points="622.1,272.0 619.5,276.8 567.0,238.4 569.3,234.1" fill="#7d7c79" stroke="#7d7c79" stroke-width="0.5"/>
<path d="M622.1 272.0L569.3 234.1" stroke="#9a9893" stroke-width="0.7" opacity="0.8"/>
<polygon points="639.3,249.9 635.5,253.8 581.3,217.9 584.7,214.5" fill="#7d7c79" stroke="#7d7c79" stroke-width="0.5"/>
<path d="M639.3 249.9L584.7 214.5" stroke="#9a9893" stroke-width="0.7" opacity="0.8"/>
<polygon points="715.8,268.4 719.6,265.8 721.2,264.3 722.7,262.6 724.1,260.7 725.5,258.7 726.8,256.4 725.6,252.9 723.6,253.3 721.7,253.9 719.8,254.6 718.0,255.6 716.3,256.8 712.8,260.2 709.6,255.1 712.9,251.3 714.2,249.3 715.3,247.2 716.3,244.9 717.1,242.5 717.9,240.0 715.4,237.5 713.4,238.7 711.4,240.1 709.6,241.6 708.0,243.2 706.5,244.9 703.7,249.4 698.6,246.5 700.9,241.7 701.7,239.5 702.2,237.1 702.6,234.7 702.8,232.3 702.8,229.8 699.2,228.6 697.4,230.6 695.7,232.7 694.2,234.7 692.9,236.9 691.9,239.0 690.3,244.1 683.8,243.8 684.8,238.7 684.9,236.4 684.7,234.2 684.3,231.9 683.7,229.7 682.9,227.5 678.7,228.2 677.4,230.7 676.2,233.2 675.3,235.6 674.5,238.0 674.1,240.4 674.0,245.4 667.0,248.0 666.4,243.1 665.8,241.2 664.8,239.3 663.7,237.6 662.3,235.9 660.7,234.4 656.4,236.8 655.8,239.5 655.4,242.2 655.2,244.7 655.2,247.0 655.5,249.2 657.1,253.5 650.4,258.7 648.2,254.9 646.9,253.5 645.3,252.3 643.5,251.3 641.5,250.5 639.3,249.9 635.5,253.8 635.8,256.4 636.3,258.8 636.9,260.9 637.7,262.9 638.8,264.6 641.9,267.6 636.6,274.7 633.0,272.4 631.2,271.8 629.1,271.5 626.9,271.4 624.6,271.6 622.1,272.0 619.5,276.8 620.6,278.8 621.9,280.6 623.3,282.1 624.8,283.4 626.4,284.4 630.6,285.6 627.5,293.6 623.0,293.2 620.9,293.4 618.7,294.0 616.4,294.8 614.1,295.9 611.7,297.2 610.6,302.2 612.4,303.4 614.3,304.3 616.3,305.0 618.2,305.5 620.2,305.6 624.9,304.9 624.3,312.6 619.7,314.0 617.6,315.1 615.5,316.4 613.5,318.0 611.5,319.8 609.5,321.8 610.0,326.1 612.3,326.4 614.5,326.4 616.7,326.2 618.8,325.8 620.9,325.1 625.4,322.7 627.4,329.1 623.1,332.1 621.3,333.7 619.7,335.5 618.1,337.6 616.7,339.8 615.3,342.1 617.3,345.4 619.6,344.7 621.8,343.9 624.0,342.9 626.0,341.8 627.9,340.4 631.7,336.8 635.8,341.1 632.4,345.1 631.1,347.0 630.0,349.1 629.1,351.3 628.4,353.6 627.7,355.9 630.8,357.7 632.9,356.3 634.9,354.8 636.8,353.3 638.5,351.6 639.9,349.9 642.7,345.5 648.2,347.4 646.0,351.9 645.3,353.9 644.9,355.9 644.7,358.0 644.6,360.0 644.7,362.1 648.4,362.4 650.1,360.5 651.7,358.6 653.1,356.6 654.3,354.7 655.2,352.8 656.6,348.3 662.9,347.7 662.0,352.1 662.0,353.9 662.2,355.6 662.6,357.4 663.2,359.0 664.0,360.6 667.8,359.4 669.0,357.3 670.0,355.2 670.8,353.1 671.5,351.1 671.8,349.3 671.9,345.2 678.2,342.3 678.7,346.1 679.2,347.6 680.0,348.9 680.9,350.1 682.1,351.2 683.4,352.1 687.0,349.8 687.5,347.6 687.9,345.5 688.2,343.6 688.2,341.7 688.0,340.1 686.8,336.8 692.5,332.0 694.2,334.9 695.2,335.9 696.4,336.6 697.8,337.2 699.4,337.6 701.0,337.9 704.1,334.6 704.0,332.6 703.8,330.8 703.4,329.1 702.9,327.6 702.2,326.3 699.9,324.1 704.5,317.9 707.1,319.6 708.5,320.1 710.1,320.2 711.7,320.1 713.5,319.8 715.3,319.4 717.6,315.5 716.9,313.9 716.1,312.5 715.2,311.2 714.2,310.2 713.0,309.5 709.9,308.5 712.9,301.6 716.3,301.9 717.9,301.7 719.6,301.2 721.4,300.4 723.2,299.5 725.1,298.4 726.3,294.1 725.1,293.1 723.8,292.2 722.4,291.6 721.0,291.1 719.5,291.0 715.8,291.6 716.8,284.5 720.6,283.3 722.3,282.5 724.0,281.3 725.7,279.9 727.4,278.4 729.1,276.7 729.2,272.5 727.5,272.2 725.8,272.0 724.1,272.0 722.4,272.3 720.7,272.8 716.9,274.8" fill="url(#gface)" stroke="#8a8884" stroke-width="0.9"/>
<polygon points="640.8,306.6 641.3,302.0 642.4,297.2 644.0,292.4 646.1,287.7 648.7,283.1 651.8,278.9 655.2,274.9 659.0,271.4 663.0,268.4 667.1,265.9 671.3,264.0 675.5,262.7 679.7,262.0 683.6,262.0 687.4,262.6 690.8,263.8 693.9,265.5 725.5,284.9 728.2,287.2 730.4,290.0 732.1,293.3 733.3,296.9 733.9,300.9 734.1,305.2 733.8,309.6 732.9,314.1 731.6,318.7 729.8,323.3 727.6,327.8 725.0,332.1 722.0,336.2 718.8,340.0 715.2,343.5 711.5,346.6 707.6,349.2 703.6,351.4 699.6,353.1 695.6,354.2 691.7,354.7 687.9,354.7 684.4,354.0 681.1,352.7 678.2,350.9 649.2,328.0 646.6,325.5 644.4,322.5 642.7,319.1 641.5,315.3 640.9,311.1" fill="url(#hubg)"/>
<polygon points="733.3,296.9 732.1,293.3 730.4,290.0 728.2,287.2 725.5,284.9 722.5,283.2 719.0,282.0 715.3,281.5 711.3,281.6 707.1,282.5 702.8,283.9 698.4,286.0 694.1,288.7 690.0,292.0 686.0,295.8 682.4,300.0 679.2,304.5 676.3,309.3 674.0,314.3 672.2,319.3 671.0,324.2 670.3,329.1 670.3,333.7 670.8,338.0 671.9,342.0 673.5,345.4 675.6,348.4 678.2,350.9 681.1,352.7 684.4,354.0 687.9,354.7 691.7,354.7 695.6,354.2 699.6,353.1 703.6,351.4 707.6,349.2 711.5,346.6 715.2,343.5 718.8,340.0 722.0,336.2 725.0,332.1 727.6,327.8 729.8,323.3 731.6,318.7 732.9,314.1 733.8,309.6 734.1,305.2 733.9,300.9" fill="#73706b" stroke="#8a8883" stroke-width="1"/>
<polygon points="729.2,300.0 728.1,296.8 726.6,294.0 724.7,291.6 722.4,289.7 719.8,288.2 716.8,287.2 713.6,286.8 710.1,287.0 706.5,287.7 702.8,289.0 699.1,290.8 695.4,293.1 691.9,295.9 688.5,299.1 685.4,302.7 682.6,306.6 680.2,310.7 678.2,314.9 676.7,319.2 675.6,323.5 675.1,327.6 675.0,331.6 675.4,335.3 676.3,338.7 677.7,341.7 679.5,344.3 681.6,346.4 684.2,348.1 687.0,349.2 690.0,349.8 693.3,349.9 696.6,349.4 700.1,348.5 703.6,347.1 707.0,345.2 710.4,342.9 713.6,340.2 716.7,337.2 719.5,333.9 722.1,330.3 724.3,326.6 726.2,322.7 727.8,318.8 728.9,314.8 729.6,310.9 729.9,307.0 729.8,303.4" fill="#6e6b67"/>
<polygon points="714.2,310.9 713.7,309.6 713.1,308.5 712.2,307.5 711.3,306.7 710.1,306.1 708.9,305.8 707.5,305.7 706.1,305.8 704.6,306.1 703.1,306.6 701.5,307.4 700.0,308.4 698.6,309.5 697.2,310.9 695.9,312.3 694.8,313.9 693.8,315.6 693.0,317.3 692.3,319.1 691.9,320.8 691.6,322.5 691.6,324.2 691.7,325.7 692.1,327.2 692.6,328.4 693.3,329.6 694.2,330.5 695.2,331.2 696.4,331.7 697.6,332.0 699.0,332.1 700.4,331.9 701.9,331.6 703.4,331.0 704.9,330.2 706.3,329.2 707.7,328.1 709.0,326.8 710.2,325.4 711.3,323.9 712.3,322.2 713.1,320.6 713.7,318.9 714.2,317.2 714.5,315.5 714.6,313.9 714.5,312.3" fill="#1e1d1c"/>
<polygon points="704.5,304.4 704.0,303.1 703.3,302.0 702.5,301.0 701.5,300.2 700.4,299.6 699.1,299.3 697.8,299.1 696.3,299.2 694.8,299.5 693.3,300.1 691.8,300.8 690.3,301.8 688.9,302.9 687.6,304.2 686.3,305.6 685.2,307.2 684.2,308.9 683.4,310.6 682.8,312.3 682.4,314.0 682.1,315.7 682.1,317.3 682.2,318.9 682.6,320.3 683.1,321.6 683.9,322.7 684.7,323.6 685.8,324.3 686.9,324.8 688.2,325.1 689.6,325.2 691.0,325.1 692.4,324.7 693.9,324.2 695.4,323.4 696.8,322.5 698.2,321.4 699.5,320.1 700.7,318.7 701.8,317.2 702.7,315.6 703.5,314.0 704.1,312.3 704.6,310.6 704.8,309.0 704.9,307.4 704.8,305.8" fill="#4a4846" opacity="0.6"/></g></g></svg></div>
<div id="dlg"><div id="dlgh"><svg width="30" height="29" style="left:0;top:0"><circle cx="19" cy="14" r="5.3" fill="#333"/><rect x="16" y="13.1" width="6" height="1.8" fill="#fff"/></svg><div class="lbl" style="left:29px;top:6px;font-size:12.7px;color:#555">RACK AND PINION</div><svg width="20" height="29" style="left:270px;top:0"><path d="M5 10L10 14L5 18zM10 10L15 14L10 18z" fill="#222"/></svg></div><svg width="30" height="20" style="left:10px;top:40px"><path d="M2 3.5H12L7 10.5z" fill="#333"/></svg><div class="lbl" style="left:29px;top:39px;font-weight:bold">Rack and Pinion Parameters</div><div class="lbl" style="left:14px;top:76.0px">Module</div><div class="inp" style="top:68.0px"><span>2 mm</span></div><div class="lbl" style="left:14px;top:112.2px">Pressure Angle</div><div class="inp" style="top:104.2px"><span>20 deg</span></div><div class="lbl" style="left:14px;top:148.5px">Pinion Teeth</div><div class="inp" style="top:140.5px"><span>16</span></div><div class="abs" style="left:236px;top:141.5px;width:16px;height:29px;background:#efefef;border-left:1px solid #d8d8d8"><svg width="16" height="29"><path d="M5 10.5L8 7.5L11 10.5z" fill="#222"/><path d="M5 18.5L8 21.5L11 18.5z" fill="#222"/><path d="M0 14.5H16" stroke="#d8d8d8"/></svg></div><div class="lbl" style="left:14px;top:184.8px">Rack Length</div><div class="inp" style="top:176.8px"><span>120 mm</span></div><div class="lbl" style="left:14px;top:221.0px">Face Width</div><div class="inp" style="top:213.0px"><span>8 mm</span></div><div class="lbl" style="left:14px;top:257.2px">Guide Rail Width</div><div class="inp" style="top:249.2px"><span>0 mm</span></div><div class="lbl" style="left:14px;top:293.5px">Backlash</div><div class="inp" style="top:285.5px"><span>0.05 mm</span></div><div class="lbl" style="left:14px;top:329.8px">Pinion Bore</div><div class="inp" style="top:321.8px"><span>3 mm</span></div><div class="hsep" style="top:362px"></div><svg width="30" height="20" style="left:10px;top:378px"><path d="M2 3.5H12L7 10.5z" fill="#333"/></svg><div class="lbl" style="left:29px;top:377px;font-weight:bold">Calculated Results</div><div class="lbl" style="left:14px;top:413px">Pitch Diameter</div><div class="lbl" style="left:137px;top:409px">32.00 mm</div><div class="lbl" style="left:14px;top:449px">Rack Teeth</div><div class="lbl" style="left:137px;top:445px">19</div><div class="hsep" style="top:482px"></div><div class="lbl" style="left:15px;top:494px;font-size:14.1px">Value must be greater than zero.</div><div class="abs" style="left:0;top:546px;width:290px;height:1px;background:#d0d0d0"></div><div class="btn" style="left:116px;top:557px;width:70px;color:#b0b0b0;border-color:#cfcfcf;background:#e9e9e9">OK</div><div class="btn" style="left:207px;top:557px;width:70px;color:#333">Cancel</div></div></body></html>
